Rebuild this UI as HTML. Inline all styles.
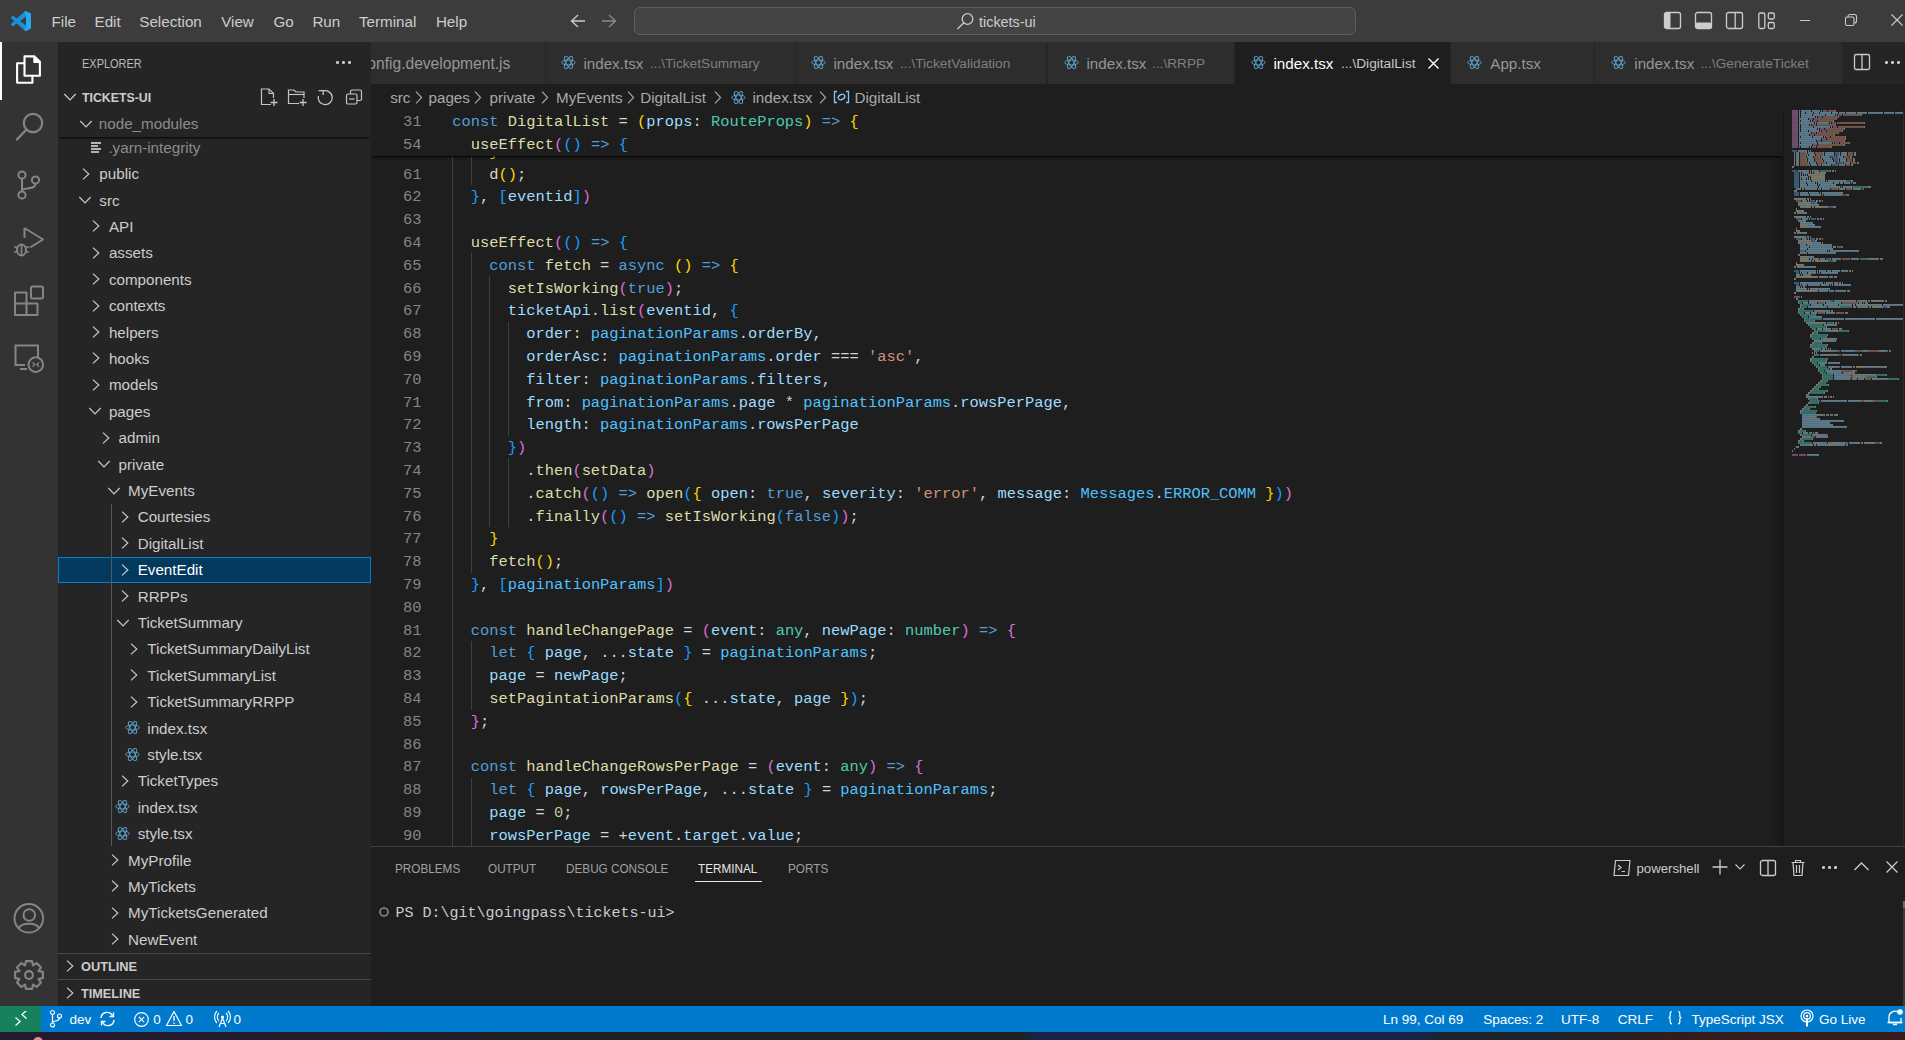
<!DOCTYPE html><html><head><meta charset="utf-8"><style>
html,body{margin:0;padding:0;}
body{width:1905px;height:1040px;position:relative;overflow:hidden;background:#1e1e1e;font-family:"Liberation Sans",sans-serif;}
.t{position:absolute;white-space:pre;}
.r{position:absolute;}
.code{position:absolute;white-space:pre;font-family:"Liberation Mono",monospace;}
</style></head><body>
<div class="r" style="left:0px;top:0px;width:1905px;height:42px;background:#3c3c3c;"></div>
<svg class="r" style="left:10.9px;top:10.6px;" width="20" height="20" viewBox="0 0 100 100"><path fill="#1c8fdc" d="M96.46 10.8 75.86.87a6.23 6.23 0 0 0-7.1 1.2L29.35 38.04 12.18 25.01a4.16 4.16 0 0 0-5.31.24L1.37 30.25a4.16 4.16 0 0 0 0 6.16L16.26 50 1.37 63.59a4.16 4.16 0 0 0 0 6.16l5.5 5a4.16 4.16 0 0 0 5.31.24l17.17-13.03 39.41 35.97a6.23 6.23 0 0 0 7.1 1.2l20.6-9.92A6.25 6.25 0 0 0 100 83.6V16.4a6.25 6.25 0 0 0-3.54-5.6ZM75.02 72.7 45.11 50l29.9-22.7v45.4Z"/>
<path fill="#27a8f5" d="M75.86.87a6.23 6.23 0 0 0-7.1 1.2L68 3 75.02 27.3V72.7L68 97l.76.93a6.23 6.23 0 0 0 7.1 1.2l20.6-9.92A6.25 6.25 0 0 0 100 83.6V16.4a6.25 6.25 0 0 0-3.54-5.6Z"/></svg>
<div class="t" style="left:51.60px;top:14.33px;font-size:15.2px;line-height:15.2px;color:#cccccc;font-family:'Liberation Sans', sans-serif;font-weight:normal;">File</div>
<div class="t" style="left:94.50px;top:14.33px;font-size:15.2px;line-height:15.2px;color:#cccccc;font-family:'Liberation Sans', sans-serif;font-weight:normal;">Edit</div>
<div class="t" style="left:139.30px;top:14.33px;font-size:15.2px;line-height:15.2px;color:#cccccc;font-family:'Liberation Sans', sans-serif;font-weight:normal;">Selection</div>
<div class="t" style="left:221.20px;top:14.33px;font-size:15.2px;line-height:15.2px;color:#cccccc;font-family:'Liberation Sans', sans-serif;font-weight:normal;">View</div>
<div class="t" style="left:273.40px;top:14.33px;font-size:15.2px;line-height:15.2px;color:#cccccc;font-family:'Liberation Sans', sans-serif;font-weight:normal;">Go</div>
<div class="t" style="left:312.40px;top:14.33px;font-size:15.2px;line-height:15.2px;color:#cccccc;font-family:'Liberation Sans', sans-serif;font-weight:normal;">Run</div>
<div class="t" style="left:359.00px;top:14.33px;font-size:15.2px;line-height:15.2px;color:#cccccc;font-family:'Liberation Sans', sans-serif;font-weight:normal;">Terminal</div>
<div class="t" style="left:435.90px;top:14.33px;font-size:15.2px;line-height:15.2px;color:#cccccc;font-family:'Liberation Sans', sans-serif;font-weight:normal;">Help</div>
<svg class="r" style="left:569px;top:13px;" width="18" height="16" viewBox="0 0 18 16"><path d="M9 2 L2.5 8 L9 14 M2.5 8 H16" stroke="#cccccc" stroke-width="1.3" fill="none"/></svg>
<svg class="r" style="left:600px;top:13px;" width="18" height="16" viewBox="0 0 18 16"><path d="M9 2 L15.5 8 L9 14 M15.5 8 H2" stroke="#8b8b8b" stroke-width="1.3" fill="none"/></svg>
<div class="r" style="left:634px;top:7px;width:720px;height:26px;border:1px solid #5e5e5e;border-radius:6px;background:#444444;"></div>
<svg class="r" style="left:956px;top:12px;" width="19" height="19" viewBox="0 0 19 19"><circle cx="11.5" cy="7" r="5.3" stroke="#c8c8c8" stroke-width="1.3" fill="none"/><path d="M7.8 10.8 L1.5 17" stroke="#c8c8c8" stroke-width="1.4"/></svg>
<div class="t" style="left:979.00px;top:14.81px;font-size:14.4px;line-height:14.4px;color:#cccccc;font-family:'Liberation Sans', sans-serif;font-weight:normal;">tickets-ui</div>
<svg class="r" style="left:1663px;top:11px;" width="20" height="20" viewBox="0 0 20 20"><rect x="1.5" y="1.5" width="16" height="16" rx="2" stroke="#cccccc" stroke-width="1.3" fill="none"/><rect x="1.5" y="1.5" width="6" height="16" rx="1.5" fill="#cccccc"/></svg>
<svg class="r" style="left:1694px;top:11px;" width="20" height="20" viewBox="0 0 20 20"><rect x="1.5" y="1.5" width="16" height="16" rx="2" stroke="#cccccc" stroke-width="1.3" fill="none"/><rect x="1.5" y="11.5" width="16" height="6" rx="1.5" fill="#cccccc"/></svg>
<svg class="r" style="left:1725px;top:11px;" width="20" height="20" viewBox="0 0 20 20"><rect x="1.5" y="1.5" width="16" height="16" rx="2" stroke="#cccccc" stroke-width="1.3" fill="none"/><path d="M10.2 1.5 V17.5" stroke="#cccccc" stroke-width="1.3"/></svg>
<svg class="r" style="left:1757px;top:11px;" width="20" height="20" viewBox="0 0 20 20"><rect x="1.8" y="2" width="6" height="15.5" rx="1.5" stroke="#cccccc" stroke-width="1.3" fill="none"/><rect x="11.3" y="2" width="6" height="6" rx="1.5" stroke="#cccccc" stroke-width="1.3" fill="none"/><rect x="11.3" y="11.5" width="6" height="6" rx="1.5" stroke="#cccccc" stroke-width="1.3" fill="none"/></svg>
<div class="r" style="left:1800px;top:20px;width:10px;height:1.2px;background:#cccccc;"></div>
<svg class="r" style="left:1844px;top:13px;" width="14" height="14" viewBox="0 0 14 14"><rect x="1.5" y="4" width="8.5" height="8.5" rx="1.5" stroke="#cccccc" stroke-width="1.1" fill="none"/><path d="M4 4 V3.5 A2 2 0 0 1 6 1.5 H10.5 A2 2 0 0 1 12.5 3.5 V8 A2 2 0 0 1 10.5 10" stroke="#cccccc" stroke-width="1.1" fill="none"/></svg>
<svg class="r" style="left:1890px;top:13px;" width="14" height="14" viewBox="0 0 14 14"><path d="M1.5 1.5 L12.5 12.5 M12.5 1.5 L1.5 12.5" stroke="#cccccc" stroke-width="1.1"/></svg>
<div class="r" style="left:0px;top:42px;width:58px;height:964px;background:#333333;"></div>
<div class="r" style="left:0px;top:42px;width:2.4px;height:58px;background:#ffffff;"></div>
<svg class="r" style="left:14px;top:54px;" width="30" height="32" viewBox="0 0 30 32"><path d="M10.5 2.4 H20.5 L25.9 7.8 V21.8 H10.5 Z" stroke="#ffffff" stroke-width="2.1" fill="none" stroke-linejoin="round"/>
<path d="M19.8 2.6 V8.5 H25.7 Z" fill="#ffffff" stroke="#ffffff" stroke-width="1" stroke-linejoin="round"/>
<path d="M10.5 9.3 H3.1 V28.8 H18.4 V21.8" stroke="#ffffff" stroke-width="2.1" fill="none" stroke-linejoin="round"/></svg>
<svg class="r" style="left:14px;top:111px;" width="32" height="32" viewBox="0 0 32 32"><circle cx="19" cy="12" r="9.2" stroke="#858585" stroke-width="2.2" fill="none"/><path d="M12.5 18.5 L3 28.5" stroke="#858585" stroke-width="2.4" stroke-linecap="round"/></svg>
<svg class="r" style="left:14px;top:168px;" width="32" height="32" viewBox="0 0 32 32"><circle cx="8" cy="7" r="3.6" stroke="#858585" stroke-width="2" fill="none"/><circle cx="21.5" cy="12" r="3.6" stroke="#858585" stroke-width="2" fill="none"/><circle cx="8" cy="27" r="3.6" stroke="#858585" stroke-width="2" fill="none"/><path d="M8 10.6 V23.4 M21.5 15.6 C21.5 20 18 19.5 8 21.5" stroke="#858585" stroke-width="2" fill="none"/></svg>
<svg class="r" style="left:12px;top:224px;" width="34" height="34" viewBox="0 0 34 34"><path d="M12.5 4 V14 M12.5 4 L31 15.5 L18 23.5" stroke="#858585" stroke-width="2" fill="none" stroke-linejoin="round"/><ellipse cx="9.5" cy="26" rx="4.5" ry="5.5" stroke="#858585" stroke-width="2" fill="none"/><path d="M2 23 H5 M2 28 H5 M14 23 H17 M14 28 H17 M9.5 20.5 V31" stroke="#858585" stroke-width="1.7"/></svg>
<svg class="r" style="left:12px;top:283px;" width="34" height="34" viewBox="0 0 34 34"><path d="M3 9.5 H14.5 V20.5 H25.5 V32 H3 Z M3 20.5 H14.5 V32" stroke="#858585" stroke-width="2" fill="none" stroke-linejoin="round"/><rect x="19" y="3.5" width="12" height="12" rx="1.5" stroke="#858585" stroke-width="2" fill="none"/></svg>
<svg class="r" style="left:12px;top:342px;" width="34" height="34" viewBox="0 0 34 34"><path d="M26 16 V3.5 H3.5 V23 H13" stroke="#858585" stroke-width="2" fill="none"/><path d="M8 27 H15" stroke="#858585" stroke-width="2"/><circle cx="23.8" cy="22.6" r="7.3" stroke="#858585" stroke-width="2" fill="none"/><path d="M20.5 20.5 L22.8 22.6 L20.5 24.7 M27 20.5 L24.7 22.6 L27 24.7" stroke="#858585" stroke-width="1.3" fill="none"/></svg>
<svg class="r" style="left:12px;top:902px;" width="34" height="34" viewBox="0 0 34 34"><circle cx="16.8" cy="16.3" r="14.3" stroke="#858585" stroke-width="2" fill="none"/><circle cx="17.3" cy="13" r="5.8" stroke="#858585" stroke-width="2" fill="none"/><path d="M6.5 26.5 C9 20 24.5 20 27.5 26.5" stroke="#858585" stroke-width="2" fill="none"/></svg>
<svg class="r" style="left:12px;top:958px;" width="34" height="34" viewBox="0 0 34 34"><path d="M30.86 13.90 L30.86 20.10 L26.49 21.01 L26.54 20.87 L28.99 24.61 L24.61 28.99 L20.87 26.54 L21.01 26.49 L20.10 30.86 L13.90 30.86 L12.99 26.49 L13.13 26.54 L9.39 28.99 L5.01 24.61 L7.46 20.87 L7.51 21.01 L3.14 20.10 L3.14 13.90 L7.51 12.99 L7.46 13.13 L5.01 9.39 L9.39 5.01 L13.13 7.46 L12.99 7.51 L13.90 3.14 L20.10 3.14 L21.01 7.51 L20.87 7.46 L24.61 5.01 L28.99 9.39 L26.54 13.13 L26.49 12.99 Z" stroke="#858585" stroke-width="2.1" fill="none" stroke-linejoin="round"/><circle cx="17" cy="17" r="3.9" stroke="#858585" stroke-width="2.1" fill="none"/></svg>
<div class="r" style="left:58px;top:42px;width:313px;height:964px;background:#252526;"></div>
<div class="t" style="left:81.90px;top:57.70px;font-size:12.4px;line-height:12.4px;color:#bbbbbb;font-family:'Liberation Sans', sans-serif;font-weight:normal;transform:scaleX(0.885);transform-origin:0 0;">EXPLORER</div>
<div class="r" style="left:336.0px;top:61px;width:2.6px;height:2.6px;background:#cccccc;border-radius:50%"></div>
<div class="r" style="left:342.2px;top:61px;width:2.6px;height:2.6px;background:#cccccc;border-radius:50%"></div>
<div class="r" style="left:348.4px;top:61px;width:2.6px;height:2.6px;background:#cccccc;border-radius:50%"></div>
<svg class="r" style="left:62.5px;top:91.2px;" width="14" height="12" viewBox="0 0 14 12"><path d="M1.3 3 L7 8.9 L12.7 3" stroke="#cccccc" stroke-width="1.25" fill="none"/></svg>
<div class="t" style="left:81.90px;top:90.51px;font-size:13.1px;line-height:13.1px;color:#cccccc;font-family:'Liberation Sans', sans-serif;font-weight:bold;transform:scaleX(0.94);transform-origin:0 0;">TICKETS-UI</div>
<svg class="r" style="left:258px;top:87px;" width="20" height="20" viewBox="0 0 20 20"><path d="M13 17.5 H3.5 V2 H11 L15.5 6.5 V11" stroke="#c5c5c5" stroke-width="1.2" fill="none"/><path d="M11 2 V6.5 H15.5" stroke="#c5c5c5" stroke-width="1.1" fill="none"/><path d="M16 12 V19 M12.5 15.5 H19.5" stroke="#c5c5c5" stroke-width="1.3"/></svg>
<svg class="r" style="left:286px;top:87px;" width="22" height="20" viewBox="0 0 22 20"><path d="M13 16.5 H2.5 V3 H8 L10 5 H18 V11" stroke="#c5c5c5" stroke-width="1.2" fill="none"/><path d="M2.5 7.5 H18" stroke="#c5c5c5" stroke-width="1.1"/><path d="M17 12 V19 M13.5 15.5 H20.5" stroke="#c5c5c5" stroke-width="1.3"/></svg>
<svg class="r" style="left:315px;top:87px;" width="20" height="20" viewBox="0 0 20 20"><path d="M8.3 3.9 A7 7 0 1 1 3.4 9.0" stroke="#c5c5c5" stroke-width="1.3" fill="none"/><path d="M3.6 3.7 H8.2 V8.1" stroke="#c5c5c5" stroke-width="1.3" fill="none"/></svg>
<svg class="r" style="left:344px;top:87px;" width="20" height="20" viewBox="0 0 20 20"><rect x="2.5" y="7" width="10.5" height="10" rx="1.5" stroke="#c5c5c5" stroke-width="1.2" fill="none"/><path d="M6.5 7 V4.5 A1.5 1.5 0 0 1 8 3 H16 A1.5 1.5 0 0 1 17.5 4.5 V12 A1.5 1.5 0 0 1 16 13.5 H13" stroke="#c5c5c5" stroke-width="1.2" fill="none"/><path d="M5 12 H10.5" stroke="#c5c5c5" stroke-width="1.2"/></svg>
<div class="r" style="left:58px;top:556.8px;width:313px;height:26.4px;background:#04395e;box-sizing:border-box;border:1px solid #007fd4;"></div>
<svg class="r" style="left:90px;top:141.4px;" width="13" height="13" viewBox="0 0 13 13"><path d="M1 2 H11 M1 5 H8 M1 8 H11 M1 11 H9" stroke="#b4b4b4" stroke-width="1.8"/></svg>
<div class="t" style="left:108.40px;top:139.73px;font-size:15.2px;line-height:15.2px;color:#8c8c8c;font-family:'Liberation Sans', sans-serif;font-weight:normal;">.yarn-integrity</div>
<svg class="r" style="left:81.3px;top:166.5px;" width="10" height="14" viewBox="0 0 10 14"><path d="M2 1.6 L7.8 7 L2 12.4" stroke="#c5c5c5" stroke-width="1.25" fill="none"/></svg>
<div class="t" style="left:99.30px;top:166.13px;font-size:15.2px;line-height:15.2px;color:#cccccc;font-family:'Liberation Sans', sans-serif;font-weight:normal;">public</div>
<svg class="r" style="left:78.0px;top:194.1px;" width="14" height="12" viewBox="0 0 14 12"><path d="M1.3 3 L7 8.9 L12.7 3" stroke="#c5c5c5" stroke-width="1.25" fill="none"/></svg>
<div class="t" style="left:99.30px;top:192.53px;font-size:15.2px;line-height:15.2px;color:#cccccc;font-family:'Liberation Sans', sans-serif;font-weight:normal;">src</div>
<svg class="r" style="left:90.9px;top:219.3px;" width="10" height="14" viewBox="0 0 10 14"><path d="M2 1.6 L7.8 7 L2 12.4" stroke="#c5c5c5" stroke-width="1.25" fill="none"/></svg>
<div class="t" style="left:108.90px;top:218.93px;font-size:15.2px;line-height:15.2px;color:#cccccc;font-family:'Liberation Sans', sans-serif;font-weight:normal;">API</div>
<svg class="r" style="left:90.9px;top:245.7px;" width="10" height="14" viewBox="0 0 10 14"><path d="M2 1.6 L7.8 7 L2 12.4" stroke="#c5c5c5" stroke-width="1.25" fill="none"/></svg>
<div class="t" style="left:108.90px;top:245.33px;font-size:15.2px;line-height:15.2px;color:#cccccc;font-family:'Liberation Sans', sans-serif;font-weight:normal;">assets</div>
<svg class="r" style="left:90.9px;top:272.09999999999997px;" width="10" height="14" viewBox="0 0 10 14"><path d="M2 1.6 L7.8 7 L2 12.4" stroke="#c5c5c5" stroke-width="1.25" fill="none"/></svg>
<div class="t" style="left:108.90px;top:271.73px;font-size:15.2px;line-height:15.2px;color:#cccccc;font-family:'Liberation Sans', sans-serif;font-weight:normal;">components</div>
<svg class="r" style="left:90.9px;top:298.5px;" width="10" height="14" viewBox="0 0 10 14"><path d="M2 1.6 L7.8 7 L2 12.4" stroke="#c5c5c5" stroke-width="1.25" fill="none"/></svg>
<div class="t" style="left:108.90px;top:298.13px;font-size:15.2px;line-height:15.2px;color:#cccccc;font-family:'Liberation Sans', sans-serif;font-weight:normal;">contexts</div>
<svg class="r" style="left:90.9px;top:324.9px;" width="10" height="14" viewBox="0 0 10 14"><path d="M2 1.6 L7.8 7 L2 12.4" stroke="#c5c5c5" stroke-width="1.25" fill="none"/></svg>
<div class="t" style="left:108.90px;top:324.53px;font-size:15.2px;line-height:15.2px;color:#cccccc;font-family:'Liberation Sans', sans-serif;font-weight:normal;">helpers</div>
<svg class="r" style="left:90.9px;top:351.3px;" width="10" height="14" viewBox="0 0 10 14"><path d="M2 1.6 L7.8 7 L2 12.4" stroke="#c5c5c5" stroke-width="1.25" fill="none"/></svg>
<div class="t" style="left:108.90px;top:350.93px;font-size:15.2px;line-height:15.2px;color:#cccccc;font-family:'Liberation Sans', sans-serif;font-weight:normal;">hooks</div>
<svg class="r" style="left:90.9px;top:377.7px;" width="10" height="14" viewBox="0 0 10 14"><path d="M2 1.6 L7.8 7 L2 12.4" stroke="#c5c5c5" stroke-width="1.25" fill="none"/></svg>
<div class="t" style="left:108.90px;top:377.33px;font-size:15.2px;line-height:15.2px;color:#cccccc;font-family:'Liberation Sans', sans-serif;font-weight:normal;">models</div>
<svg class="r" style="left:87.60000000000001px;top:405.29999999999995px;" width="14" height="12" viewBox="0 0 14 12"><path d="M1.3 3 L7 8.9 L12.7 3" stroke="#c5c5c5" stroke-width="1.25" fill="none"/></svg>
<div class="t" style="left:108.90px;top:403.73px;font-size:15.2px;line-height:15.2px;color:#cccccc;font-family:'Liberation Sans', sans-serif;font-weight:normal;">pages</div>
<svg class="r" style="left:100.5px;top:430.5px;" width="10" height="14" viewBox="0 0 10 14"><path d="M2 1.6 L7.8 7 L2 12.4" stroke="#c5c5c5" stroke-width="1.25" fill="none"/></svg>
<div class="t" style="left:118.50px;top:430.13px;font-size:15.2px;line-height:15.2px;color:#cccccc;font-family:'Liberation Sans', sans-serif;font-weight:normal;">admin</div>
<svg class="r" style="left:97.2px;top:458.09999999999997px;" width="14" height="12" viewBox="0 0 14 12"><path d="M1.3 3 L7 8.9 L12.7 3" stroke="#c5c5c5" stroke-width="1.25" fill="none"/></svg>
<div class="t" style="left:118.50px;top:456.53px;font-size:15.2px;line-height:15.2px;color:#cccccc;font-family:'Liberation Sans', sans-serif;font-weight:normal;">private</div>
<svg class="r" style="left:106.8px;top:484.49999999999994px;" width="14" height="12" viewBox="0 0 14 12"><path d="M1.3 3 L7 8.9 L12.7 3" stroke="#c5c5c5" stroke-width="1.25" fill="none"/></svg>
<div class="t" style="left:128.10px;top:482.93px;font-size:15.2px;line-height:15.2px;color:#cccccc;font-family:'Liberation Sans', sans-serif;font-weight:normal;">MyEvents</div>
<svg class="r" style="left:119.69999999999999px;top:509.70000000000005px;" width="10" height="14" viewBox="0 0 10 14"><path d="M2 1.6 L7.8 7 L2 12.4" stroke="#c5c5c5" stroke-width="1.25" fill="none"/></svg>
<div class="t" style="left:137.70px;top:509.33px;font-size:15.2px;line-height:15.2px;color:#cccccc;font-family:'Liberation Sans', sans-serif;font-weight:normal;">Courtesies</div>
<svg class="r" style="left:119.69999999999999px;top:536.1px;" width="10" height="14" viewBox="0 0 10 14"><path d="M2 1.6 L7.8 7 L2 12.4" stroke="#c5c5c5" stroke-width="1.25" fill="none"/></svg>
<div class="t" style="left:137.70px;top:535.73px;font-size:15.2px;line-height:15.2px;color:#cccccc;font-family:'Liberation Sans', sans-serif;font-weight:normal;">DigitalList</div>
<svg class="r" style="left:119.69999999999999px;top:562.5px;" width="10" height="14" viewBox="0 0 10 14"><path d="M2 1.6 L7.8 7 L2 12.4" stroke="#c5c5c5" stroke-width="1.25" fill="none"/></svg>
<div class="t" style="left:137.70px;top:562.13px;font-size:15.2px;line-height:15.2px;color:#ffffff;font-family:'Liberation Sans', sans-serif;font-weight:normal;">EventEdit</div>
<svg class="r" style="left:119.69999999999999px;top:588.9000000000001px;" width="10" height="14" viewBox="0 0 10 14"><path d="M2 1.6 L7.8 7 L2 12.4" stroke="#c5c5c5" stroke-width="1.25" fill="none"/></svg>
<div class="t" style="left:137.70px;top:588.53px;font-size:15.2px;line-height:15.2px;color:#cccccc;font-family:'Liberation Sans', sans-serif;font-weight:normal;">RRPPs</div>
<svg class="r" style="left:116.39999999999999px;top:616.5px;" width="14" height="12" viewBox="0 0 14 12"><path d="M1.3 3 L7 8.9 L12.7 3" stroke="#c5c5c5" stroke-width="1.25" fill="none"/></svg>
<div class="t" style="left:137.70px;top:614.93px;font-size:15.2px;line-height:15.2px;color:#cccccc;font-family:'Liberation Sans', sans-serif;font-weight:normal;">TicketSummary</div>
<svg class="r" style="left:129.3px;top:641.7px;" width="10" height="14" viewBox="0 0 10 14"><path d="M2 1.6 L7.8 7 L2 12.4" stroke="#c5c5c5" stroke-width="1.25" fill="none"/></svg>
<div class="t" style="left:147.30px;top:641.33px;font-size:15.2px;line-height:15.2px;color:#cccccc;font-family:'Liberation Sans', sans-serif;font-weight:normal;">TicketSummaryDailyList</div>
<svg class="r" style="left:129.3px;top:668.1px;" width="10" height="14" viewBox="0 0 10 14"><path d="M2 1.6 L7.8 7 L2 12.4" stroke="#c5c5c5" stroke-width="1.25" fill="none"/></svg>
<div class="t" style="left:147.30px;top:667.73px;font-size:15.2px;line-height:15.2px;color:#cccccc;font-family:'Liberation Sans', sans-serif;font-weight:normal;">TicketSummaryList</div>
<svg class="r" style="left:129.3px;top:694.5px;" width="10" height="14" viewBox="0 0 10 14"><path d="M2 1.6 L7.8 7 L2 12.4" stroke="#c5c5c5" stroke-width="1.25" fill="none"/></svg>
<div class="t" style="left:147.30px;top:694.13px;font-size:15.2px;line-height:15.2px;color:#cccccc;font-family:'Liberation Sans', sans-serif;font-weight:normal;">TicketSummaryRRPP</div>
<svg class="r" style="left:124.80000000000001px;top:720.1000000000001px;" width="15" height="15" viewBox="0 0 15 15"><ellipse cx="7.5" cy="7.5" rx="6.8" ry="2.5" transform="rotate(0 7.5 7.5)" stroke="#5c9fc8" stroke-width="0.95" fill="none"/><ellipse cx="7.5" cy="7.5" rx="6.8" ry="2.5" transform="rotate(60 7.5 7.5)" stroke="#5c9fc8" stroke-width="0.95" fill="none"/><ellipse cx="7.5" cy="7.5" rx="6.8" ry="2.5" transform="rotate(120 7.5 7.5)" stroke="#5c9fc8" stroke-width="0.95" fill="none"/></svg>
<div class="t" style="left:147.30px;top:720.53px;font-size:15.2px;line-height:15.2px;color:#cccccc;font-family:'Liberation Sans', sans-serif;font-weight:normal;">index.tsx</div>
<svg class="r" style="left:124.80000000000001px;top:746.5px;" width="15" height="15" viewBox="0 0 15 15"><ellipse cx="7.5" cy="7.5" rx="6.8" ry="2.5" transform="rotate(0 7.5 7.5)" stroke="#5c9fc8" stroke-width="0.95" fill="none"/><ellipse cx="7.5" cy="7.5" rx="6.8" ry="2.5" transform="rotate(60 7.5 7.5)" stroke="#5c9fc8" stroke-width="0.95" fill="none"/><ellipse cx="7.5" cy="7.5" rx="6.8" ry="2.5" transform="rotate(120 7.5 7.5)" stroke="#5c9fc8" stroke-width="0.95" fill="none"/></svg>
<div class="t" style="left:147.30px;top:746.93px;font-size:15.2px;line-height:15.2px;color:#cccccc;font-family:'Liberation Sans', sans-serif;font-weight:normal;">style.tsx</div>
<svg class="r" style="left:119.69999999999999px;top:773.7px;" width="10" height="14" viewBox="0 0 10 14"><path d="M2 1.6 L7.8 7 L2 12.4" stroke="#c5c5c5" stroke-width="1.25" fill="none"/></svg>
<div class="t" style="left:137.70px;top:773.33px;font-size:15.2px;line-height:15.2px;color:#cccccc;font-family:'Liberation Sans', sans-serif;font-weight:normal;">TicketTypes</div>
<svg class="r" style="left:115.19999999999999px;top:799.3px;" width="15" height="15" viewBox="0 0 15 15"><ellipse cx="7.5" cy="7.5" rx="6.8" ry="2.5" transform="rotate(0 7.5 7.5)" stroke="#5c9fc8" stroke-width="0.95" fill="none"/><ellipse cx="7.5" cy="7.5" rx="6.8" ry="2.5" transform="rotate(60 7.5 7.5)" stroke="#5c9fc8" stroke-width="0.95" fill="none"/><ellipse cx="7.5" cy="7.5" rx="6.8" ry="2.5" transform="rotate(120 7.5 7.5)" stroke="#5c9fc8" stroke-width="0.95" fill="none"/></svg>
<div class="t" style="left:137.70px;top:799.73px;font-size:15.2px;line-height:15.2px;color:#cccccc;font-family:'Liberation Sans', sans-serif;font-weight:normal;">index.tsx</div>
<svg class="r" style="left:115.19999999999999px;top:825.7px;" width="15" height="15" viewBox="0 0 15 15"><ellipse cx="7.5" cy="7.5" rx="6.8" ry="2.5" transform="rotate(0 7.5 7.5)" stroke="#5c9fc8" stroke-width="0.95" fill="none"/><ellipse cx="7.5" cy="7.5" rx="6.8" ry="2.5" transform="rotate(60 7.5 7.5)" stroke="#5c9fc8" stroke-width="0.95" fill="none"/><ellipse cx="7.5" cy="7.5" rx="6.8" ry="2.5" transform="rotate(120 7.5 7.5)" stroke="#5c9fc8" stroke-width="0.95" fill="none"/></svg>
<div class="t" style="left:137.70px;top:826.13px;font-size:15.2px;line-height:15.2px;color:#cccccc;font-family:'Liberation Sans', sans-serif;font-weight:normal;">style.tsx</div>
<svg class="r" style="left:110.1px;top:852.9000000000001px;" width="10" height="14" viewBox="0 0 10 14"><path d="M2 1.6 L7.8 7 L2 12.4" stroke="#c5c5c5" stroke-width="1.25" fill="none"/></svg>
<div class="t" style="left:128.10px;top:852.53px;font-size:15.2px;line-height:15.2px;color:#cccccc;font-family:'Liberation Sans', sans-serif;font-weight:normal;">MyProfile</div>
<svg class="r" style="left:110.1px;top:879.3px;" width="10" height="14" viewBox="0 0 10 14"><path d="M2 1.6 L7.8 7 L2 12.4" stroke="#c5c5c5" stroke-width="1.25" fill="none"/></svg>
<div class="t" style="left:128.10px;top:878.93px;font-size:15.2px;line-height:15.2px;color:#cccccc;font-family:'Liberation Sans', sans-serif;font-weight:normal;">MyTickets</div>
<svg class="r" style="left:110.1px;top:905.7px;" width="10" height="14" viewBox="0 0 10 14"><path d="M2 1.6 L7.8 7 L2 12.4" stroke="#c5c5c5" stroke-width="1.25" fill="none"/></svg>
<div class="t" style="left:128.10px;top:905.33px;font-size:15.2px;line-height:15.2px;color:#cccccc;font-family:'Liberation Sans', sans-serif;font-weight:normal;">MyTicketsGenerated</div>
<svg class="r" style="left:110.1px;top:932.0999999999999px;" width="10" height="14" viewBox="0 0 10 14"><path d="M2 1.6 L7.8 7 L2 12.4" stroke="#c5c5c5" stroke-width="1.25" fill="none"/></svg>
<div class="t" style="left:128.10px;top:931.73px;font-size:15.2px;line-height:15.2px;color:#cccccc;font-family:'Liberation Sans', sans-serif;font-weight:normal;">NewEvent</div>
<div class="r" style="left:111px;top:504px;width:1px;height:342px;background:#585858;"></div>
<div class="r" style="left:58px;top:110.4px;width:313px;height:26.4px;background:#252526;box-shadow:0 3px 2px -2px #000;"></div>
<svg class="r" style="left:79px;top:117.6px;" width="14" height="12" viewBox="0 0 14 12"><path d="M1.3 3 L7 8.9 L12.7 3" stroke="#c5c5c5" stroke-width="1.25" fill="none"/></svg>
<div class="t" style="left:98.80px;top:115.73px;font-size:15.2px;line-height:15.2px;color:#8c8c8c;font-family:'Liberation Sans', sans-serif;font-weight:normal;">node_modules</div>
<div class="r" style="left:58px;top:952.8px;width:313px;height:1px;background:#474748;"></div>
<svg class="r" style="left:64.5px;top:959.3px;" width="10" height="14" viewBox="0 0 10 14"><path d="M2 1.6 L7.8 7 L2 12.4" stroke="#c5c5c5" stroke-width="1.25" fill="none"/></svg>
<div class="t" style="left:81.30px;top:960.11px;font-size:13.1px;line-height:13.1px;color:#cccccc;font-family:'Liberation Sans', sans-serif;font-weight:bold;transform:scaleX(0.975);transform-origin:0 0;">OUTLINE</div>
<div class="r" style="left:58px;top:979.2px;width:313px;height:1px;background:#474748;"></div>
<svg class="r" style="left:64.5px;top:985.7px;" width="10" height="14" viewBox="0 0 10 14"><path d="M2 1.6 L7.8 7 L2 12.4" stroke="#c5c5c5" stroke-width="1.25" fill="none"/></svg>
<div class="t" style="left:81.30px;top:986.51px;font-size:13.1px;line-height:13.1px;color:#cccccc;font-family:'Liberation Sans', sans-serif;font-weight:bold;transform:scaleX(0.97);transform-origin:0 0;">TIMELINE</div>
<div class="r" style="left:371px;top:42px;width:1534px;height:42px;background:#252526;"></div>
<div class="r" style="left:371px;top:42px;width:173.70000000000005px;height:42px;background:#2d2d2d;"></div>
<div class="r" style="left:371px;top:42px;width:173px;height:42px;overflow:hidden;">
<div class="t" style="left:-3.70px;top:13.59px;font-size:15.6px;line-height:15.6px;color:#969696;font-family:'Liberation Sans', sans-serif;font-weight:normal;">onfig.development.js</div>
</div>
<div class="r" style="left:545.7px;top:42px;width:249.0px;height:42px;background:#2d2d2d;"></div>
<svg class="r" style="left:561.0px;top:54.9px;" width="15" height="15" viewBox="0 0 15 15"><ellipse cx="7.5" cy="7.5" rx="6.8" ry="2.5" transform="rotate(0 7.5 7.5)" stroke="#5c9fc8" stroke-width="0.95" fill="none"/><ellipse cx="7.5" cy="7.5" rx="6.8" ry="2.5" transform="rotate(60 7.5 7.5)" stroke="#5c9fc8" stroke-width="0.95" fill="none"/><ellipse cx="7.5" cy="7.5" rx="6.8" ry="2.5" transform="rotate(120 7.5 7.5)" stroke="#5c9fc8" stroke-width="0.95" fill="none"/></svg>
<div class="t" style="left:583.40px;top:55.93px;font-size:15.2px;line-height:15.2px;color:#969696;font-family:'Liberation Sans', sans-serif;font-weight:normal;">index.tsx</div>
<div class="t" style="left:649.80px;top:57.20px;font-size:13.7px;line-height:13.7px;color:#7f7f7f;font-family:'Liberation Sans', sans-serif;font-weight:normal;">...\TicketSummary</div>
<div class="r" style="left:795.7px;top:42px;width:250.79999999999995px;height:42px;background:#2d2d2d;"></div>
<svg class="r" style="left:810.5px;top:54.9px;" width="15" height="15" viewBox="0 0 15 15"><ellipse cx="7.5" cy="7.5" rx="6.8" ry="2.5" transform="rotate(0 7.5 7.5)" stroke="#5c9fc8" stroke-width="0.95" fill="none"/><ellipse cx="7.5" cy="7.5" rx="6.8" ry="2.5" transform="rotate(60 7.5 7.5)" stroke="#5c9fc8" stroke-width="0.95" fill="none"/><ellipse cx="7.5" cy="7.5" rx="6.8" ry="2.5" transform="rotate(120 7.5 7.5)" stroke="#5c9fc8" stroke-width="0.95" fill="none"/></svg>
<div class="t" style="left:833.50px;top:55.93px;font-size:15.2px;line-height:15.2px;color:#969696;font-family:'Liberation Sans', sans-serif;font-weight:normal;">index.tsx</div>
<div class="t" style="left:900.00px;top:57.20px;font-size:13.7px;line-height:13.7px;color:#7f7f7f;font-family:'Liberation Sans', sans-serif;font-weight:normal;">...\TicketValidation</div>
<div class="r" style="left:1047.5px;top:42px;width:186.79999999999995px;height:42px;background:#2d2d2d;"></div>
<svg class="r" style="left:1063.5px;top:54.9px;" width="15" height="15" viewBox="0 0 15 15"><ellipse cx="7.5" cy="7.5" rx="6.8" ry="2.5" transform="rotate(0 7.5 7.5)" stroke="#5c9fc8" stroke-width="0.95" fill="none"/><ellipse cx="7.5" cy="7.5" rx="6.8" ry="2.5" transform="rotate(60 7.5 7.5)" stroke="#5c9fc8" stroke-width="0.95" fill="none"/><ellipse cx="7.5" cy="7.5" rx="6.8" ry="2.5" transform="rotate(120 7.5 7.5)" stroke="#5c9fc8" stroke-width="0.95" fill="none"/></svg>
<div class="t" style="left:1086.50px;top:55.93px;font-size:15.2px;line-height:15.2px;color:#969696;font-family:'Liberation Sans', sans-serif;font-weight:normal;">index.tsx</div>
<div class="t" style="left:1152.00px;top:57.20px;font-size:13.7px;line-height:13.7px;color:#7f7f7f;font-family:'Liberation Sans', sans-serif;font-weight:normal;">...\RRPP</div>
<div class="r" style="left:1235.3px;top:42px;width:214.9000000000001px;height:42px;background:#1e1e1e;"></div>
<svg class="r" style="left:1251.2px;top:54.9px;" width="15" height="15" viewBox="0 0 15 15"><ellipse cx="7.5" cy="7.5" rx="6.8" ry="2.5" transform="rotate(0 7.5 7.5)" stroke="#5c9fc8" stroke-width="0.95" fill="none"/><ellipse cx="7.5" cy="7.5" rx="6.8" ry="2.5" transform="rotate(60 7.5 7.5)" stroke="#5c9fc8" stroke-width="0.95" fill="none"/><ellipse cx="7.5" cy="7.5" rx="6.8" ry="2.5" transform="rotate(120 7.5 7.5)" stroke="#5c9fc8" stroke-width="0.95" fill="none"/></svg>
<div class="t" style="left:1273.50px;top:55.93px;font-size:15.2px;line-height:15.2px;color:#ffffff;font-family:'Liberation Sans', sans-serif;font-weight:normal;">index.tsx</div>
<div class="t" style="left:1341.00px;top:57.20px;font-size:13.7px;line-height:13.7px;color:#c8c8c8;font-family:'Liberation Sans', sans-serif;font-weight:normal;">...\DigitalList</div>
<svg class="r" style="left:1427px;top:57px;" width="13" height="13" viewBox="0 0 13 13"><path d="M1.5 1.5 L11.5 11.5 M11.5 1.5 L1.5 11.5" stroke="#ffffff" stroke-width="1.4"/></svg>
<div class="r" style="left:1451.2px;top:42px;width:143.0px;height:42px;background:#2d2d2d;"></div>
<svg class="r" style="left:1467.4px;top:54.9px;" width="15" height="15" viewBox="0 0 15 15"><ellipse cx="7.5" cy="7.5" rx="6.8" ry="2.5" transform="rotate(0 7.5 7.5)" stroke="#5c9fc8" stroke-width="0.95" fill="none"/><ellipse cx="7.5" cy="7.5" rx="6.8" ry="2.5" transform="rotate(60 7.5 7.5)" stroke="#5c9fc8" stroke-width="0.95" fill="none"/><ellipse cx="7.5" cy="7.5" rx="6.8" ry="2.5" transform="rotate(120 7.5 7.5)" stroke="#5c9fc8" stroke-width="0.95" fill="none"/></svg>
<div class="t" style="left:1490.30px;top:55.93px;font-size:15.2px;line-height:15.2px;color:#969696;font-family:'Liberation Sans', sans-serif;font-weight:normal;">App.tsx</div>
<div class="r" style="left:1595.2px;top:42px;width:246.79999999999995px;height:42px;background:#2d2d2d;"></div>
<svg class="r" style="left:1611.0px;top:54.9px;" width="15" height="15" viewBox="0 0 15 15"><ellipse cx="7.5" cy="7.5" rx="6.8" ry="2.5" transform="rotate(0 7.5 7.5)" stroke="#5c9fc8" stroke-width="0.95" fill="none"/><ellipse cx="7.5" cy="7.5" rx="6.8" ry="2.5" transform="rotate(60 7.5 7.5)" stroke="#5c9fc8" stroke-width="0.95" fill="none"/><ellipse cx="7.5" cy="7.5" rx="6.8" ry="2.5" transform="rotate(120 7.5 7.5)" stroke="#5c9fc8" stroke-width="0.95" fill="none"/></svg>
<div class="t" style="left:1634.30px;top:55.93px;font-size:15.2px;line-height:15.2px;color:#969696;font-family:'Liberation Sans', sans-serif;font-weight:normal;">index.tsx</div>
<div class="t" style="left:1700.50px;top:57.20px;font-size:13.7px;line-height:13.7px;color:#7f7f7f;font-family:'Liberation Sans', sans-serif;font-weight:normal;">...\GenerateTicket</div>
<svg class="r" style="left:1853px;top:53px;" width="18" height="18" viewBox="0 0 18 18"><rect x="1.5" y="1.5" width="15" height="15" rx="1.5" stroke="#cccccc" stroke-width="1.3" fill="none"/><path d="M9 1.5 V16.5" stroke="#cccccc" stroke-width="1.3"/></svg>
<div class="r" style="left:1885.0px;top:61.2px;width:2.6px;height:2.6px;background:#cccccc;border-radius:50%"></div>
<div class="r" style="left:1891.1px;top:61.2px;width:2.6px;height:2.6px;background:#cccccc;border-radius:50%"></div>
<div class="r" style="left:1897.2px;top:61.2px;width:2.6px;height:2.6px;background:#cccccc;border-radius:50%"></div>
<div class="t" style="left:390.20px;top:90.13px;font-size:15.2px;line-height:15.2px;color:#a9a9a9;font-family:'Liberation Sans', sans-serif;font-weight:normal;">src</div>
<div class="t" style="left:428.50px;top:90.13px;font-size:15.2px;line-height:15.2px;color:#a9a9a9;font-family:'Liberation Sans', sans-serif;font-weight:normal;">pages</div>
<div class="t" style="left:489.50px;top:90.13px;font-size:15.2px;line-height:15.2px;color:#a9a9a9;font-family:'Liberation Sans', sans-serif;font-weight:normal;">private</div>
<div class="t" style="left:556.00px;top:90.13px;font-size:15.2px;line-height:15.2px;color:#a9a9a9;font-family:'Liberation Sans', sans-serif;font-weight:normal;">MyEvents</div>
<div class="t" style="left:640.20px;top:90.13px;font-size:15.2px;line-height:15.2px;color:#a9a9a9;font-family:'Liberation Sans', sans-serif;font-weight:normal;">DigitalList</div>
<svg class="r" style="left:414.20000000000005px;top:90px;" width="10" height="15" viewBox="0 0 10 15"><path d="M2 1.6 L7.6 7.5 L2 13.4" stroke="#a9a9a9" stroke-width="1.15" fill="none"/></svg>
<svg class="r" style="left:473.20000000000005px;top:90px;" width="10" height="15" viewBox="0 0 10 15"><path d="M2 1.6 L7.6 7.5 L2 13.4" stroke="#a9a9a9" stroke-width="1.15" fill="none"/></svg>
<svg class="r" style="left:540.2px;top:90px;" width="10" height="15" viewBox="0 0 10 15"><path d="M2 1.6 L7.6 7.5 L2 13.4" stroke="#a9a9a9" stroke-width="1.15" fill="none"/></svg>
<svg class="r" style="left:626.0px;top:90px;" width="10" height="15" viewBox="0 0 10 15"><path d="M2 1.6 L7.6 7.5 L2 13.4" stroke="#a9a9a9" stroke-width="1.15" fill="none"/></svg>
<svg class="r" style="left:712.9px;top:90px;" width="10" height="15" viewBox="0 0 10 15"><path d="M2 1.6 L7.6 7.5 L2 13.4" stroke="#a9a9a9" stroke-width="1.15" fill="none"/></svg>
<svg class="r" style="left:730.5px;top:89.8px;" width="15" height="15" viewBox="0 0 15 15"><ellipse cx="7.5" cy="7.5" rx="6.8" ry="2.5" transform="rotate(0 7.5 7.5)" stroke="#5c9fc8" stroke-width="0.95" fill="none"/><ellipse cx="7.5" cy="7.5" rx="6.8" ry="2.5" transform="rotate(60 7.5 7.5)" stroke="#5c9fc8" stroke-width="0.95" fill="none"/><ellipse cx="7.5" cy="7.5" rx="6.8" ry="2.5" transform="rotate(120 7.5 7.5)" stroke="#5c9fc8" stroke-width="0.95" fill="none"/></svg>
<div class="t" style="left:752.50px;top:90.13px;font-size:15.2px;line-height:15.2px;color:#a9a9a9;font-family:'Liberation Sans', sans-serif;font-weight:normal;">index.tsx</div>
<svg class="r" style="left:817.5px;top:90px;" width="10" height="15" viewBox="0 0 10 15"><path d="M2 1.6 L7.6 7.5 L2 13.4" stroke="#a9a9a9" stroke-width="1.15" fill="none"/></svg>
<svg class="r" style="left:833px;top:90px;" width="17" height="14" viewBox="0 0 17 14"><path d="M4 1.5 H1.5 V12.5 H4 M13 1.5 H15.5 V12.5 H13" stroke="#8cc4f2" stroke-width="1.3" fill="none"/><ellipse cx="8.5" cy="7" rx="3.5" ry="2.5" transform="rotate(-30 8.5 7)" stroke="#8cc4f2" stroke-width="1.3" fill="none"/></svg>
<div class="t" style="left:854.50px;top:90.13px;font-size:15.2px;line-height:15.2px;color:#a9a9a9;font-family:'Liberation Sans', sans-serif;font-weight:normal;">DigitalList</div>
<div class="r" style="left:371px;top:110.4px;width:1412px;height:736px;overflow:hidden;">
<div class="r" style="left:81.30px;top:28.90px;width:1px;height:23.3px;background:#404040;"></div>
<div class="r" style="left:99.77px;top:28.90px;width:1px;height:23.3px;background:#404040;"></div>
<div class="r" style="left:81.30px;top:51.70px;width:1px;height:23.3px;background:#404040;"></div>
<div class="r" style="left:99.77px;top:51.70px;width:1px;height:23.3px;background:#404040;"></div>
<div class="r" style="left:81.30px;top:74.50px;width:1px;height:23.3px;background:#404040;"></div>
<div class="r" style="left:81.30px;top:97.30px;width:1px;height:23.3px;background:#404040;"></div>
<div class="r" style="left:81.30px;top:120.10px;width:1px;height:23.3px;background:#404040;"></div>
<div class="r" style="left:81.30px;top:142.90px;width:1px;height:23.3px;background:#404040;"></div>
<div class="r" style="left:99.77px;top:142.90px;width:1px;height:23.3px;background:#404040;"></div>
<div class="r" style="left:81.30px;top:165.70px;width:1px;height:23.3px;background:#404040;"></div>
<div class="r" style="left:99.77px;top:165.70px;width:1px;height:23.3px;background:#404040;"></div>
<div class="r" style="left:118.24px;top:165.70px;width:1px;height:23.3px;background:#404040;"></div>
<div class="r" style="left:81.30px;top:188.50px;width:1px;height:23.3px;background:#404040;"></div>
<div class="r" style="left:99.77px;top:188.50px;width:1px;height:23.3px;background:#404040;"></div>
<div class="r" style="left:118.24px;top:188.50px;width:1px;height:23.3px;background:#404040;"></div>
<div class="r" style="left:81.30px;top:211.30px;width:1px;height:23.3px;background:#404040;"></div>
<div class="r" style="left:99.77px;top:211.30px;width:1px;height:23.3px;background:#404040;"></div>
<div class="r" style="left:118.24px;top:211.30px;width:1px;height:23.3px;background:#404040;"></div>
<div class="r" style="left:136.72px;top:211.30px;width:1px;height:23.3px;background:#404040;"></div>
<div class="r" style="left:81.30px;top:234.10px;width:1px;height:23.3px;background:#404040;"></div>
<div class="r" style="left:99.77px;top:234.10px;width:1px;height:23.3px;background:#404040;"></div>
<div class="r" style="left:118.24px;top:234.10px;width:1px;height:23.3px;background:#404040;"></div>
<div class="r" style="left:136.72px;top:234.10px;width:1px;height:23.3px;background:#404040;"></div>
<div class="r" style="left:81.30px;top:256.90px;width:1px;height:23.3px;background:#404040;"></div>
<div class="r" style="left:99.77px;top:256.90px;width:1px;height:23.3px;background:#404040;"></div>
<div class="r" style="left:118.24px;top:256.90px;width:1px;height:23.3px;background:#404040;"></div>
<div class="r" style="left:136.72px;top:256.90px;width:1px;height:23.3px;background:#404040;"></div>
<div class="r" style="left:81.30px;top:279.70px;width:1px;height:23.3px;background:#404040;"></div>
<div class="r" style="left:99.77px;top:279.70px;width:1px;height:23.3px;background:#404040;"></div>
<div class="r" style="left:118.24px;top:279.70px;width:1px;height:23.3px;background:#404040;"></div>
<div class="r" style="left:136.72px;top:279.70px;width:1px;height:23.3px;background:#404040;"></div>
<div class="r" style="left:81.30px;top:302.50px;width:1px;height:23.3px;background:#404040;"></div>
<div class="r" style="left:99.77px;top:302.50px;width:1px;height:23.3px;background:#404040;"></div>
<div class="r" style="left:118.24px;top:302.50px;width:1px;height:23.3px;background:#404040;"></div>
<div class="r" style="left:136.72px;top:302.50px;width:1px;height:23.3px;background:#404040;"></div>
<div class="r" style="left:81.30px;top:325.30px;width:1px;height:23.3px;background:#404040;"></div>
<div class="r" style="left:99.77px;top:325.30px;width:1px;height:23.3px;background:#404040;"></div>
<div class="r" style="left:118.24px;top:325.30px;width:1px;height:23.3px;background:#404040;"></div>
<div class="r" style="left:81.30px;top:348.10px;width:1px;height:23.3px;background:#404040;"></div>
<div class="r" style="left:99.77px;top:348.10px;width:1px;height:23.3px;background:#404040;"></div>
<div class="r" style="left:118.24px;top:348.10px;width:1px;height:23.3px;background:#404040;"></div>
<div class="r" style="left:136.72px;top:348.10px;width:1px;height:23.3px;background:#404040;"></div>
<div class="r" style="left:81.30px;top:370.90px;width:1px;height:23.3px;background:#404040;"></div>
<div class="r" style="left:99.77px;top:370.90px;width:1px;height:23.3px;background:#404040;"></div>
<div class="r" style="left:118.24px;top:370.90px;width:1px;height:23.3px;background:#404040;"></div>
<div class="r" style="left:136.72px;top:370.90px;width:1px;height:23.3px;background:#404040;"></div>
<div class="r" style="left:81.30px;top:393.70px;width:1px;height:23.3px;background:#404040;"></div>
<div class="r" style="left:99.77px;top:393.70px;width:1px;height:23.3px;background:#404040;"></div>
<div class="r" style="left:118.24px;top:393.70px;width:1px;height:23.3px;background:#404040;"></div>
<div class="r" style="left:136.72px;top:393.70px;width:1px;height:23.3px;background:#404040;"></div>
<div class="r" style="left:81.30px;top:416.50px;width:1px;height:23.3px;background:#404040;"></div>
<div class="r" style="left:99.77px;top:416.50px;width:1px;height:23.3px;background:#404040;"></div>
<div class="r" style="left:81.30px;top:439.30px;width:1px;height:23.3px;background:#404040;"></div>
<div class="r" style="left:99.77px;top:439.30px;width:1px;height:23.3px;background:#404040;"></div>
<div class="r" style="left:81.30px;top:462.10px;width:1px;height:23.3px;background:#404040;"></div>
<div class="r" style="left:81.30px;top:484.90px;width:1px;height:23.3px;background:#404040;"></div>
<div class="r" style="left:81.30px;top:507.70px;width:1px;height:23.3px;background:#404040;"></div>
<div class="r" style="left:81.30px;top:530.50px;width:1px;height:23.3px;background:#404040;"></div>
<div class="r" style="left:99.77px;top:530.50px;width:1px;height:23.3px;background:#404040;"></div>
<div class="r" style="left:81.30px;top:553.30px;width:1px;height:23.3px;background:#404040;"></div>
<div class="r" style="left:99.77px;top:553.30px;width:1px;height:23.3px;background:#404040;"></div>
<div class="r" style="left:81.30px;top:576.10px;width:1px;height:23.3px;background:#404040;"></div>
<div class="r" style="left:99.77px;top:576.10px;width:1px;height:23.3px;background:#404040;"></div>
<div class="r" style="left:81.30px;top:598.90px;width:1px;height:23.3px;background:#404040;"></div>
<div class="r" style="left:81.30px;top:621.70px;width:1px;height:23.3px;background:#404040;"></div>
<div class="r" style="left:81.30px;top:644.50px;width:1px;height:23.3px;background:#404040;"></div>
<div class="r" style="left:81.30px;top:667.30px;width:1px;height:23.3px;background:#404040;"></div>
<div class="r" style="left:99.77px;top:667.30px;width:1px;height:23.3px;background:#404040;"></div>
<div class="r" style="left:81.30px;top:690.10px;width:1px;height:23.3px;background:#404040;"></div>
<div class="r" style="left:99.77px;top:690.10px;width:1px;height:23.3px;background:#404040;"></div>
<div class="r" style="left:81.30px;top:712.90px;width:1px;height:23.3px;background:#404040;"></div>
<div class="r" style="left:99.77px;top:712.90px;width:1px;height:23.3px;background:#404040;"></div>
<div class="code" style="left:-9.50px;width:60px;text-align:right;top:30.50px;font-size:15.4px;line-height:22.8px;color:#858585;">60</div>
<div class="code" style="left:81.30px;top:30.50px;font-size:15.4px;line-height:22.8px;color:#d4d4d4;">    <span style="color:#ffd700">}</span></div>
<div class="code" style="left:-9.50px;width:60px;text-align:right;top:53.30px;font-size:15.4px;line-height:22.8px;color:#858585;">61</div>
<div class="code" style="left:81.30px;top:53.30px;font-size:15.4px;line-height:22.8px;color:#d4d4d4;">    <span style="color:#dcdcaa">d</span><span style="color:#ffd700">()</span>;</div>
<div class="code" style="left:-9.50px;width:60px;text-align:right;top:76.10px;font-size:15.4px;line-height:22.8px;color:#858585;">62</div>
<div class="code" style="left:81.30px;top:76.10px;font-size:15.4px;line-height:22.8px;color:#d4d4d4;">  <span style="color:#179fff">}</span>, <span style="color:#179fff">[</span><span style="color:#9cdcfe">eventid</span><span style="color:#179fff">]</span><span style="color:#da70d6">)</span></div>
<div class="code" style="left:-9.50px;width:60px;text-align:right;top:98.90px;font-size:15.4px;line-height:22.8px;color:#858585;">63</div>
<div class="code" style="left:81.30px;top:98.90px;font-size:15.4px;line-height:22.8px;color:#d4d4d4;"></div>
<div class="code" style="left:-9.50px;width:60px;text-align:right;top:121.70px;font-size:15.4px;line-height:22.8px;color:#858585;">64</div>
<div class="code" style="left:81.30px;top:121.70px;font-size:15.4px;line-height:22.8px;color:#d4d4d4;">  <span style="color:#dcdcaa">useEffect</span><span style="color:#da70d6">(</span><span style="color:#179fff">()</span> <span style="color:#569cd6">=&gt;</span> <span style="color:#179fff">{</span></div>
<div class="code" style="left:-9.50px;width:60px;text-align:right;top:144.50px;font-size:15.4px;line-height:22.8px;color:#858585;">65</div>
<div class="code" style="left:81.30px;top:144.50px;font-size:15.4px;line-height:22.8px;color:#d4d4d4;">    <span style="color:#569cd6">const</span> <span style="color:#dcdcaa">fetch</span> = <span style="color:#569cd6">async</span> <span style="color:#ffd700">()</span> <span style="color:#569cd6">=&gt;</span> <span style="color:#ffd700">{</span></div>
<div class="code" style="left:-9.50px;width:60px;text-align:right;top:167.30px;font-size:15.4px;line-height:22.8px;color:#858585;">66</div>
<div class="code" style="left:81.30px;top:167.30px;font-size:15.4px;line-height:22.8px;color:#d4d4d4;">      <span style="color:#dcdcaa">setIsWorking</span><span style="color:#da70d6">(</span><span style="color:#569cd6">true</span><span style="color:#da70d6">)</span>;</div>
<div class="code" style="left:-9.50px;width:60px;text-align:right;top:190.10px;font-size:15.4px;line-height:22.8px;color:#858585;">67</div>
<div class="code" style="left:81.30px;top:190.10px;font-size:15.4px;line-height:22.8px;color:#d4d4d4;">      <span style="color:#9cdcfe">ticketApi</span>.<span style="color:#dcdcaa">list</span><span style="color:#da70d6">(</span><span style="color:#9cdcfe">eventid</span>, <span style="color:#179fff">{</span></div>
<div class="code" style="left:-9.50px;width:60px;text-align:right;top:212.90px;font-size:15.4px;line-height:22.8px;color:#858585;">68</div>
<div class="code" style="left:81.30px;top:212.90px;font-size:15.4px;line-height:22.8px;color:#d4d4d4;">        <span style="color:#9cdcfe">order</span>: <span style="color:#4fc1ff">paginationParams</span>.<span style="color:#9cdcfe">orderBy</span>,</div>
<div class="code" style="left:-9.50px;width:60px;text-align:right;top:235.70px;font-size:15.4px;line-height:22.8px;color:#858585;">69</div>
<div class="code" style="left:81.30px;top:235.70px;font-size:15.4px;line-height:22.8px;color:#d4d4d4;">        <span style="color:#9cdcfe">orderAsc</span>: <span style="color:#4fc1ff">paginationParams</span>.<span style="color:#9cdcfe">order</span> === <span style="color:#ce9178">&#x27;asc&#x27;</span>,</div>
<div class="code" style="left:-9.50px;width:60px;text-align:right;top:258.50px;font-size:15.4px;line-height:22.8px;color:#858585;">70</div>
<div class="code" style="left:81.30px;top:258.50px;font-size:15.4px;line-height:22.8px;color:#d4d4d4;">        <span style="color:#9cdcfe">filter</span>: <span style="color:#4fc1ff">paginationParams</span>.<span style="color:#9cdcfe">filters</span>,</div>
<div class="code" style="left:-9.50px;width:60px;text-align:right;top:281.30px;font-size:15.4px;line-height:22.8px;color:#858585;">71</div>
<div class="code" style="left:81.30px;top:281.30px;font-size:15.4px;line-height:22.8px;color:#d4d4d4;">        <span style="color:#9cdcfe">from</span>: <span style="color:#4fc1ff">paginationParams</span>.<span style="color:#9cdcfe">page</span> * <span style="color:#4fc1ff">paginationParams</span>.<span style="color:#9cdcfe">rowsPerPage</span>,</div>
<div class="code" style="left:-9.50px;width:60px;text-align:right;top:304.10px;font-size:15.4px;line-height:22.8px;color:#858585;">72</div>
<div class="code" style="left:81.30px;top:304.10px;font-size:15.4px;line-height:22.8px;color:#d4d4d4;">        <span style="color:#9cdcfe">length</span>: <span style="color:#4fc1ff">paginationParams</span>.<span style="color:#9cdcfe">rowsPerPage</span></div>
<div class="code" style="left:-9.50px;width:60px;text-align:right;top:326.90px;font-size:15.4px;line-height:22.8px;color:#858585;">73</div>
<div class="code" style="left:81.30px;top:326.90px;font-size:15.4px;line-height:22.8px;color:#d4d4d4;">      <span style="color:#179fff">}</span><span style="color:#da70d6">)</span></div>
<div class="code" style="left:-9.50px;width:60px;text-align:right;top:349.70px;font-size:15.4px;line-height:22.8px;color:#858585;">74</div>
<div class="code" style="left:81.30px;top:349.70px;font-size:15.4px;line-height:22.8px;color:#d4d4d4;">        .<span style="color:#dcdcaa">then</span><span style="color:#da70d6">(</span><span style="color:#dcdcaa">setData</span><span style="color:#da70d6">)</span></div>
<div class="code" style="left:-9.50px;width:60px;text-align:right;top:372.50px;font-size:15.4px;line-height:22.8px;color:#858585;">75</div>
<div class="code" style="left:81.30px;top:372.50px;font-size:15.4px;line-height:22.8px;color:#d4d4d4;">        .<span style="color:#dcdcaa">catch</span><span style="color:#da70d6">(</span><span style="color:#179fff">()</span> <span style="color:#569cd6">=&gt;</span> <span style="color:#dcdcaa">open</span><span style="color:#179fff">(</span><span style="color:#ffd700">{</span> <span style="color:#9cdcfe">open</span>: <span style="color:#569cd6">true</span>, <span style="color:#9cdcfe">severity</span>: <span style="color:#ce9178">&#x27;error&#x27;</span>, <span style="color:#9cdcfe">message</span>: <span style="color:#4fc1ff">Messages</span>.<span style="color:#4fc1ff">ERROR_COMM</span> <span style="color:#ffd700">}</span><span style="color:#179fff">)</span><span style="color:#da70d6">)</span></div>
<div class="code" style="left:-9.50px;width:60px;text-align:right;top:395.30px;font-size:15.4px;line-height:22.8px;color:#858585;">76</div>
<div class="code" style="left:81.30px;top:395.30px;font-size:15.4px;line-height:22.8px;color:#d4d4d4;">        .<span style="color:#dcdcaa">finally</span><span style="color:#da70d6">(</span><span style="color:#179fff">()</span> <span style="color:#569cd6">=&gt;</span> <span style="color:#dcdcaa">setIsWorking</span><span style="color:#179fff">(</span><span style="color:#569cd6">false</span><span style="color:#179fff">)</span><span style="color:#da70d6">)</span>;</div>
<div class="code" style="left:-9.50px;width:60px;text-align:right;top:418.10px;font-size:15.4px;line-height:22.8px;color:#858585;">77</div>
<div class="code" style="left:81.30px;top:418.10px;font-size:15.4px;line-height:22.8px;color:#d4d4d4;">    <span style="color:#ffd700">}</span></div>
<div class="code" style="left:-9.50px;width:60px;text-align:right;top:440.90px;font-size:15.4px;line-height:22.8px;color:#858585;">78</div>
<div class="code" style="left:81.30px;top:440.90px;font-size:15.4px;line-height:22.8px;color:#d4d4d4;">    <span style="color:#dcdcaa">fetch</span><span style="color:#ffd700">()</span>;</div>
<div class="code" style="left:-9.50px;width:60px;text-align:right;top:463.70px;font-size:15.4px;line-height:22.8px;color:#858585;">79</div>
<div class="code" style="left:81.30px;top:463.70px;font-size:15.4px;line-height:22.8px;color:#d4d4d4;">  <span style="color:#179fff">}</span>, <span style="color:#179fff">[</span><span style="color:#4fc1ff">paginationParams</span><span style="color:#179fff">]</span><span style="color:#da70d6">)</span></div>
<div class="code" style="left:-9.50px;width:60px;text-align:right;top:486.50px;font-size:15.4px;line-height:22.8px;color:#858585;">80</div>
<div class="code" style="left:81.30px;top:486.50px;font-size:15.4px;line-height:22.8px;color:#d4d4d4;"></div>
<div class="code" style="left:-9.50px;width:60px;text-align:right;top:509.30px;font-size:15.4px;line-height:22.8px;color:#858585;">81</div>
<div class="code" style="left:81.30px;top:509.30px;font-size:15.4px;line-height:22.8px;color:#d4d4d4;">  <span style="color:#569cd6">const</span> <span style="color:#dcdcaa">handleChangePage</span> = <span style="color:#da70d6">(</span><span style="color:#9cdcfe">event</span>: <span style="color:#4ec9b0">any</span>, <span style="color:#9cdcfe">newPage</span>: <span style="color:#4ec9b0">number</span><span style="color:#da70d6">)</span> <span style="color:#569cd6">=&gt;</span> <span style="color:#da70d6">{</span></div>
<div class="code" style="left:-9.50px;width:60px;text-align:right;top:532.10px;font-size:15.4px;line-height:22.8px;color:#858585;">82</div>
<div class="code" style="left:81.30px;top:532.10px;font-size:15.4px;line-height:22.8px;color:#d4d4d4;">    <span style="color:#569cd6">let</span> <span style="color:#179fff">{</span> <span style="color:#9cdcfe">page</span>, ...<span style="color:#9cdcfe">state</span> <span style="color:#179fff">}</span> = <span style="color:#4fc1ff">paginationParams</span>;</div>
<div class="code" style="left:-9.50px;width:60px;text-align:right;top:554.90px;font-size:15.4px;line-height:22.8px;color:#858585;">83</div>
<div class="code" style="left:81.30px;top:554.90px;font-size:15.4px;line-height:22.8px;color:#d4d4d4;">    <span style="color:#9cdcfe">page</span> = <span style="color:#9cdcfe">newPage</span>;</div>
<div class="code" style="left:-9.50px;width:60px;text-align:right;top:577.70px;font-size:15.4px;line-height:22.8px;color:#858585;">84</div>
<div class="code" style="left:81.30px;top:577.70px;font-size:15.4px;line-height:22.8px;color:#d4d4d4;">    <span style="color:#dcdcaa">setPagintationParams</span><span style="color:#179fff">(</span><span style="color:#ffd700">{</span> ...<span style="color:#9cdcfe">state</span>, <span style="color:#9cdcfe">page</span> <span style="color:#ffd700">}</span><span style="color:#179fff">)</span>;</div>
<div class="code" style="left:-9.50px;width:60px;text-align:right;top:600.50px;font-size:15.4px;line-height:22.8px;color:#858585;">85</div>
<div class="code" style="left:81.30px;top:600.50px;font-size:15.4px;line-height:22.8px;color:#d4d4d4;">  <span style="color:#da70d6">}</span>;</div>
<div class="code" style="left:-9.50px;width:60px;text-align:right;top:623.30px;font-size:15.4px;line-height:22.8px;color:#858585;">86</div>
<div class="code" style="left:81.30px;top:623.30px;font-size:15.4px;line-height:22.8px;color:#d4d4d4;"></div>
<div class="code" style="left:-9.50px;width:60px;text-align:right;top:646.10px;font-size:15.4px;line-height:22.8px;color:#858585;">87</div>
<div class="code" style="left:81.30px;top:646.10px;font-size:15.4px;line-height:22.8px;color:#d4d4d4;">  <span style="color:#569cd6">const</span> <span style="color:#dcdcaa">handleChangeRowsPerPage</span> = <span style="color:#da70d6">(</span><span style="color:#9cdcfe">event</span>: <span style="color:#4ec9b0">any</span><span style="color:#da70d6">)</span> <span style="color:#569cd6">=&gt;</span> <span style="color:#da70d6">{</span></div>
<div class="code" style="left:-9.50px;width:60px;text-align:right;top:668.90px;font-size:15.4px;line-height:22.8px;color:#858585;">88</div>
<div class="code" style="left:81.30px;top:668.90px;font-size:15.4px;line-height:22.8px;color:#d4d4d4;">    <span style="color:#569cd6">let</span> <span style="color:#179fff">{</span> <span style="color:#9cdcfe">page</span>, <span style="color:#9cdcfe">rowsPerPage</span>, ...<span style="color:#9cdcfe">state</span> <span style="color:#179fff">}</span> = <span style="color:#4fc1ff">paginationParams</span>;</div>
<div class="code" style="left:-9.50px;width:60px;text-align:right;top:691.70px;font-size:15.4px;line-height:22.8px;color:#858585;">89</div>
<div class="code" style="left:81.30px;top:691.70px;font-size:15.4px;line-height:22.8px;color:#d4d4d4;">    <span style="color:#9cdcfe">page</span> = <span style="color:#b5cea8">0</span>;</div>
<div class="code" style="left:-9.50px;width:60px;text-align:right;top:714.50px;font-size:15.4px;line-height:22.8px;color:#858585;">90</div>
<div class="code" style="left:81.30px;top:714.50px;font-size:15.4px;line-height:22.8px;color:#d4d4d4;">    <span style="color:#9cdcfe">rowsPerPage</span> = +<span style="color:#9cdcfe">event</span>.<span style="color:#9cdcfe">target</span>.<span style="color:#9cdcfe">value</span>;</div>
</div>
<div class="r" style="left:371px;top:110.4px;width:1412.5px;height:45.6px;background:#1e1e1e;box-shadow:0 3px 2px -2px #000;"></div>
<div class="code" style="left:361.50px;width:60px;text-align:right;top:111.20px;font-size:15.4px;line-height:22.8px;color:#858585;">31</div>
<div class="code" style="left:452.30px;top:111.20px;font-size:15.4px;line-height:22.8px;color:#d4d4d4;"><span style="color:#569cd6">const</span> <span style="color:#dcdcaa">DigitalList</span> = <span style="color:#ffd700">(</span><span style="color:#9cdcfe">props</span>: <span style="color:#4ec9b0">RouteProps</span><span style="color:#ffd700">)</span> <span style="color:#569cd6">=&gt;</span> <span style="color:#ffd700">{</span></div>
<div class="code" style="left:361.50px;width:60px;text-align:right;top:134.00px;font-size:15.4px;line-height:22.8px;color:#858585;">54</div>
<div class="code" style="left:452.30px;top:134.00px;font-size:15.4px;line-height:22.8px;color:#d4d4d4;">  <span style="color:#dcdcaa">useEffect</span><span style="color:#da70d6">(</span><span style="color:#179fff">()</span> <span style="color:#569cd6">=&gt;</span> <span style="color:#179fff">{</span></div>
<div class="r" style="left:1771px;top:156px;width:12.5px;height:690px;background:linear-gradient(90deg,rgba(0,0,0,0) 0%,rgba(0,0,0,0.25) 100%);"></div>
<div class="r" style="left:1783px;top:110.4px;width:1px;height:735.6px;background:#141414;"></div>
<svg class="r" style="left:1792px;top:109.6px;opacity:0.62;" width="113" height="350" viewBox="0 0 113 350"><rect x="0.0" y="0.2" width="6.0" height="1.5" fill="#c586c0"/><rect x="7.0" y="0.2" width="1.0" height="1.5" fill="#d4d4d4"/><rect x="9.0" y="0.2" width="9.0" height="1.5" fill="#9cdcfe"/><rect x="18.0" y="0.2" width="1.0" height="1.5" fill="#d4d4d4"/><rect x="20.0" y="0.2" width="8.0" height="1.5" fill="#9cdcfe"/><rect x="29.0" y="0.2" width="1.0" height="1.5" fill="#d4d4d4"/><rect x="31.0" y="0.2" width="4.0" height="1.5" fill="#c586c0"/><rect x="36.0" y="0.2" width="7.0" height="1.5" fill="#ce9178"/><rect x="43.0" y="0.2" width="1.0" height="1.5" fill="#d4d4d4"/><rect x="0.0" y="2.2" width="6.0" height="1.5" fill="#c586c0"/><rect x="7.0" y="2.2" width="1.0" height="1.5" fill="#d4d4d4"/><rect x="9.0" y="2.2" width="3.0" height="1.5" fill="#9cdcfe"/><rect x="12.0" y="2.2" width="1.0" height="1.5" fill="#d4d4d4"/><rect x="14.0" y="2.2" width="6.0" height="1.5" fill="#9cdcfe"/><rect x="20.0" y="2.2" width="1.0" height="1.5" fill="#d4d4d4"/><rect x="22.0" y="2.2" width="4.0" height="1.5" fill="#9cdcfe"/><rect x="26.0" y="2.2" width="1.0" height="1.5" fill="#d4d4d4"/><rect x="28.0" y="2.2" width="10.0" height="1.5" fill="#9cdcfe"/><rect x="38.0" y="2.2" width="1.0" height="1.5" fill="#d4d4d4"/><rect x="40.0" y="2.2" width="5.0" height="1.5" fill="#9cdcfe"/><rect x="45.0" y="2.2" width="1.0" height="1.5" fill="#d4d4d4"/><rect x="47.0" y="2.2" width="5.0" height="1.5" fill="#9cdcfe"/><rect x="52.0" y="2.2" width="1.0" height="1.5" fill="#d4d4d4"/><rect x="54.0" y="2.2" width="9.0" height="1.5" fill="#9cdcfe"/><rect x="63.0" y="2.2" width="1.0" height="1.5" fill="#d4d4d4"/><rect x="65.0" y="2.2" width="9.0" height="1.5" fill="#9cdcfe"/><rect x="74.0" y="2.2" width="1.0" height="1.5" fill="#d4d4d4"/><rect x="76.0" y="2.2" width="14.0" height="1.5" fill="#9cdcfe"/><rect x="90.0" y="2.2" width="1.0" height="1.5" fill="#d4d4d4"/><rect x="92.0" y="2.2" width="9.0" height="1.5" fill="#9cdcfe"/><rect x="101.0" y="2.2" width="1.0" height="1.5" fill="#d4d4d4"/><rect x="103.0" y="2.2" width="8.0" height="1.5" fill="#9cdcfe"/><rect x="111.0" y="2.2" width="1.0" height="1.5" fill="#d4d4d4"/><rect x="0.0" y="4.2" width="6.0" height="1.5" fill="#c586c0"/><rect x="7.0" y="4.2" width="1.0" height="1.5" fill="#d4d4d4"/><rect x="9.0" y="4.2" width="10.0" height="1.5" fill="#9cdcfe"/><rect x="19.0" y="4.2" width="1.0" height="1.5" fill="#d4d4d4"/><rect x="21.0" y="4.2" width="11.0" height="1.5" fill="#9cdcfe"/><rect x="32.0" y="4.2" width="1.0" height="1.5" fill="#d4d4d4"/><rect x="34.0" y="4.2" width="9.0" height="1.5" fill="#9cdcfe"/><rect x="44.0" y="4.2" width="1.0" height="1.5" fill="#d4d4d4"/><rect x="46.0" y="4.2" width="4.0" height="1.5" fill="#c586c0"/><rect x="51.0" y="4.2" width="18.0" height="1.5" fill="#ce9178"/><rect x="69.0" y="4.2" width="1.0" height="1.5" fill="#d4d4d4"/><rect x="0.0" y="6.2" width="6.0" height="1.5" fill="#c586c0"/><rect x="7.0" y="6.2" width="1.0" height="1.5" fill="#d4d4d4"/><rect x="9.0" y="6.2" width="14.0" height="1.5" fill="#9cdcfe"/><rect x="24.0" y="6.2" width="1.0" height="1.5" fill="#d4d4d4"/><rect x="26.0" y="6.2" width="4.0" height="1.5" fill="#c586c0"/><rect x="31.0" y="6.2" width="15.0" height="1.5" fill="#ce9178"/><rect x="46.0" y="6.2" width="1.0" height="1.5" fill="#d4d4d4"/><rect x="0.0" y="8.2" width="6.0" height="1.5" fill="#c586c0"/><rect x="7.0" y="8.2" width="9.0" height="1.5" fill="#9cdcfe"/><rect x="17.0" y="8.2" width="4.0" height="1.5" fill="#c586c0"/><rect x="22.0" y="8.2" width="22.0" height="1.5" fill="#ce9178"/><rect x="44.0" y="8.2" width="1.0" height="1.5" fill="#d4d4d4"/><rect x="0.0" y="10.2" width="6.0" height="1.5" fill="#c586c0"/><rect x="7.0" y="10.2" width="1.0" height="1.5" fill="#d4d4d4"/><rect x="9.0" y="10.2" width="9.0" height="1.5" fill="#9cdcfe"/><rect x="19.0" y="10.2" width="1.0" height="1.5" fill="#d4d4d4"/><rect x="21.0" y="10.2" width="4.0" height="1.5" fill="#c586c0"/><rect x="26.0" y="10.2" width="15.0" height="1.5" fill="#ce9178"/><rect x="41.0" y="10.2" width="1.0" height="1.5" fill="#d4d4d4"/><rect x="0.0" y="12.2" width="6.0" height="1.5" fill="#c586c0"/><rect x="7.0" y="12.2" width="14.0" height="1.5" fill="#9cdcfe"/><rect x="21.0" y="12.2" width="1.0" height="1.5" fill="#d4d4d4"/><rect x="23.0" y="12.2" width="1.0" height="1.5" fill="#d4d4d4"/><rect x="25.0" y="12.2" width="12.0" height="1.5" fill="#9cdcfe"/><rect x="38.0" y="12.2" width="1.0" height="1.5" fill="#d4d4d4"/><rect x="40.0" y="12.2" width="4.0" height="1.5" fill="#c586c0"/><rect x="45.0" y="12.2" width="27.0" height="1.5" fill="#ce9178"/><rect x="72.0" y="12.2" width="1.0" height="1.5" fill="#d4d4d4"/><rect x="0.0" y="14.2" width="6.0" height="1.5" fill="#c586c0"/><rect x="7.0" y="14.2" width="1.0" height="1.5" fill="#d4d4d4"/><rect x="9.0" y="14.2" width="8.0" height="1.5" fill="#9cdcfe"/><rect x="18.0" y="14.2" width="1.0" height="1.5" fill="#d4d4d4"/><rect x="20.0" y="14.2" width="4.0" height="1.5" fill="#c586c0"/><rect x="25.0" y="14.2" width="18.0" height="1.5" fill="#ce9178"/><rect x="43.0" y="14.2" width="1.0" height="1.5" fill="#d4d4d4"/><rect x="0.0" y="16.2" width="6.0" height="1.5" fill="#c586c0"/><rect x="7.0" y="16.2" width="1.0" height="1.5" fill="#d4d4d4"/><rect x="9.0" y="16.2" width="11.0" height="1.5" fill="#9cdcfe"/><rect x="20.0" y="16.2" width="1.0" height="1.5" fill="#d4d4d4"/><rect x="22.0" y="16.2" width="16.0" height="1.5" fill="#9cdcfe"/><rect x="39.0" y="16.2" width="1.0" height="1.5" fill="#d4d4d4"/><rect x="41.0" y="16.2" width="4.0" height="1.5" fill="#c586c0"/><rect x="46.0" y="16.2" width="26.0" height="1.5" fill="#ce9178"/><rect x="72.0" y="16.2" width="1.0" height="1.5" fill="#d4d4d4"/><rect x="0.0" y="18.2" width="6.0" height="1.5" fill="#c586c0"/><rect x="7.0" y="18.2" width="1.0" height="1.5" fill="#d4d4d4"/><rect x="9.0" y="18.2" width="16.0" height="1.5" fill="#9cdcfe"/><rect x="26.0" y="18.2" width="1.0" height="1.5" fill="#d4d4d4"/><rect x="28.0" y="18.2" width="4.0" height="1.5" fill="#c586c0"/><rect x="33.0" y="18.2" width="19.0" height="1.5" fill="#ce9178"/><rect x="52.0" y="18.2" width="1.0" height="1.5" fill="#d4d4d4"/><rect x="0.0" y="20.2" width="6.0" height="1.5" fill="#c586c0"/><rect x="7.0" y="20.2" width="1.0" height="1.5" fill="#d4d4d4"/><rect x="9.0" y="20.2" width="6.0" height="1.5" fill="#9cdcfe"/><rect x="15.0" y="20.2" width="1.0" height="1.5" fill="#d4d4d4"/><rect x="17.0" y="20.2" width="10.0" height="1.5" fill="#9cdcfe"/><rect x="28.0" y="20.2" width="1.0" height="1.5" fill="#d4d4d4"/><rect x="30.0" y="20.2" width="4.0" height="1.5" fill="#c586c0"/><rect x="35.0" y="20.2" width="15.0" height="1.5" fill="#ce9178"/><rect x="50.0" y="20.2" width="1.0" height="1.5" fill="#d4d4d4"/><rect x="0.0" y="22.2" width="6.0" height="1.5" fill="#c586c0"/><rect x="7.0" y="22.2" width="12.0" height="1.5" fill="#9cdcfe"/><rect x="20.0" y="22.2" width="4.0" height="1.5" fill="#c586c0"/><rect x="25.0" y="22.2" width="21.0" height="1.5" fill="#ce9178"/><rect x="46.0" y="22.2" width="1.0" height="1.5" fill="#d4d4d4"/><rect x="0.0" y="24.2" width="6.0" height="1.5" fill="#c586c0"/><rect x="7.0" y="24.2" width="10.0" height="1.5" fill="#9cdcfe"/><rect x="18.0" y="24.2" width="4.0" height="1.5" fill="#c586c0"/><rect x="23.0" y="24.2" width="19.0" height="1.5" fill="#ce9178"/><rect x="42.0" y="24.2" width="1.0" height="1.5" fill="#d4d4d4"/><rect x="0.0" y="26.2" width="6.0" height="1.5" fill="#c586c0"/><rect x="7.0" y="26.2" width="1.0" height="1.5" fill="#d4d4d4"/><rect x="9.0" y="26.2" width="10.0" height="1.5" fill="#9cdcfe"/><rect x="19.0" y="26.2" width="1.0" height="1.5" fill="#d4d4d4"/><rect x="21.0" y="26.2" width="10.0" height="1.5" fill="#9cdcfe"/><rect x="32.0" y="26.2" width="1.0" height="1.5" fill="#d4d4d4"/><rect x="34.0" y="26.2" width="4.0" height="1.5" fill="#c586c0"/><rect x="39.0" y="26.2" width="14.0" height="1.5" fill="#ce9178"/><rect x="53.0" y="26.2" width="1.0" height="1.5" fill="#d4d4d4"/><rect x="0.0" y="28.2" width="6.0" height="1.5" fill="#c586c0"/><rect x="7.0" y="28.2" width="22.0" height="1.5" fill="#9cdcfe"/><rect x="30.0" y="28.2" width="4.0" height="1.5" fill="#c586c0"/><rect x="35.0" y="28.2" width="18.0" height="1.5" fill="#ce9178"/><rect x="53.0" y="28.2" width="1.0" height="1.5" fill="#d4d4d4"/><rect x="0.0" y="30.2" width="6.0" height="1.5" fill="#c586c0"/><rect x="7.0" y="30.2" width="17.0" height="1.5" fill="#9cdcfe"/><rect x="25.0" y="30.2" width="4.0" height="1.5" fill="#c586c0"/><rect x="30.0" y="30.2" width="22.0" height="1.5" fill="#ce9178"/><rect x="52.0" y="30.2" width="1.0" height="1.5" fill="#d4d4d4"/><rect x="0.0" y="32.2" width="6.0" height="1.5" fill="#c586c0"/><rect x="7.0" y="32.2" width="1.0" height="1.5" fill="#d4d4d4"/><rect x="9.0" y="32.2" width="15.0" height="1.5" fill="#9cdcfe"/><rect x="24.0" y="32.2" width="1.0" height="1.5" fill="#d4d4d4"/><rect x="26.0" y="32.2" width="14.0" height="1.5" fill="#9cdcfe"/><rect x="41.0" y="32.2" width="1.0" height="1.5" fill="#d4d4d4"/><rect x="43.0" y="32.2" width="4.0" height="1.5" fill="#c586c0"/><rect x="48.0" y="32.2" width="9.0" height="1.5" fill="#ce9178"/><rect x="57.0" y="32.2" width="1.0" height="1.5" fill="#d4d4d4"/><rect x="0.0" y="34.2" width="6.0" height="1.5" fill="#c586c0"/><rect x="7.0" y="34.2" width="13.0" height="1.5" fill="#9cdcfe"/><rect x="21.0" y="34.2" width="4.0" height="1.5" fill="#c586c0"/><rect x="26.0" y="34.2" width="26.0" height="1.5" fill="#ce9178"/><rect x="52.0" y="34.2" width="1.0" height="1.5" fill="#d4d4d4"/><rect x="0.0" y="36.2" width="6.0" height="1.5" fill="#c586c0"/><rect x="7.0" y="36.2" width="1.0" height="1.5" fill="#d4d4d4"/><rect x="9.0" y="36.2" width="8.0" height="1.5" fill="#9cdcfe"/><rect x="18.0" y="36.2" width="1.0" height="1.5" fill="#d4d4d4"/><rect x="20.0" y="36.2" width="4.0" height="1.5" fill="#c586c0"/><rect x="25.0" y="36.2" width="14.0" height="1.5" fill="#ce9178"/><rect x="39.0" y="36.2" width="1.0" height="1.5" fill="#d4d4d4"/><rect x="0.0" y="40.2" width="5.0" height="1.5" fill="#569cd6"/><rect x="6.0" y="40.2" width="9.0" height="1.5" fill="#9cdcfe"/><rect x="16.0" y="40.2" width="1.0" height="1.5" fill="#d4d4d4"/><rect x="18.0" y="40.2" width="1.0" height="1.5" fill="#d4d4d4"/><rect x="2.0" y="42.2" width="1.0" height="1.5" fill="#d4d4d4"/><rect x="4.0" y="42.2" width="2.0" height="1.5" fill="#9cdcfe"/><rect x="6.0" y="42.2" width="1.0" height="1.5" fill="#d4d4d4"/><rect x="8.0" y="42.2" width="6.0" height="1.5" fill="#ce9178"/><rect x="14.0" y="42.2" width="1.0" height="1.5" fill="#d4d4d4"/><rect x="16.0" y="42.2" width="5.0" height="1.5" fill="#9cdcfe"/><rect x="21.0" y="42.2" width="1.0" height="1.5" fill="#d4d4d4"/><rect x="23.0" y="42.2" width="8.0" height="1.5" fill="#ce9178"/><rect x="31.0" y="42.2" width="1.0" height="1.5" fill="#d4d4d4"/><rect x="33.0" y="42.2" width="8.0" height="1.5" fill="#9cdcfe"/><rect x="41.0" y="42.2" width="1.0" height="1.5" fill="#d4d4d4"/><rect x="43.0" y="42.2" width="4.0" height="1.5" fill="#569cd6"/><rect x="47.0" y="42.2" width="1.0" height="1.5" fill="#d4d4d4"/><rect x="49.0" y="42.2" width="5.0" height="1.5" fill="#9cdcfe"/><rect x="54.0" y="42.2" width="1.0" height="1.5" fill="#d4d4d4"/><rect x="56.0" y="42.2" width="5.0" height="1.5" fill="#ce9178"/><rect x="62.0" y="42.2" width="2.0" height="1.5" fill="#d4d4d4"/><rect x="2.0" y="44.2" width="1.0" height="1.5" fill="#d4d4d4"/><rect x="4.0" y="44.2" width="2.0" height="1.5" fill="#9cdcfe"/><rect x="6.0" y="44.2" width="1.0" height="1.5" fill="#d4d4d4"/><rect x="8.0" y="44.2" width="7.0" height="1.5" fill="#ce9178"/><rect x="15.0" y="44.2" width="1.0" height="1.5" fill="#d4d4d4"/><rect x="17.0" y="44.2" width="5.0" height="1.5" fill="#9cdcfe"/><rect x="22.0" y="44.2" width="1.0" height="1.5" fill="#d4d4d4"/><rect x="24.0" y="44.2" width="7.0" height="1.5" fill="#ce9178"/><rect x="31.0" y="44.2" width="1.0" height="1.5" fill="#d4d4d4"/><rect x="33.0" y="44.2" width="8.0" height="1.5" fill="#9cdcfe"/><rect x="41.0" y="44.2" width="1.0" height="1.5" fill="#d4d4d4"/><rect x="43.0" y="44.2" width="4.0" height="1.5" fill="#569cd6"/><rect x="47.0" y="44.2" width="1.0" height="1.5" fill="#d4d4d4"/><rect x="49.0" y="44.2" width="5.0" height="1.5" fill="#9cdcfe"/><rect x="54.0" y="44.2" width="1.0" height="1.5" fill="#d4d4d4"/><rect x="56.0" y="44.2" width="5.0" height="1.5" fill="#ce9178"/><rect x="62.0" y="44.2" width="2.0" height="1.5" fill="#d4d4d4"/><rect x="2.0" y="46.2" width="1.0" height="1.5" fill="#d4d4d4"/><rect x="4.0" y="46.2" width="2.0" height="1.5" fill="#9cdcfe"/><rect x="6.0" y="46.2" width="1.0" height="1.5" fill="#d4d4d4"/><rect x="8.0" y="46.2" width="5.0" height="1.5" fill="#ce9178"/><rect x="13.0" y="46.2" width="1.0" height="1.5" fill="#d4d4d4"/><rect x="15.0" y="46.2" width="5.0" height="1.5" fill="#9cdcfe"/><rect x="20.0" y="46.2" width="1.0" height="1.5" fill="#d4d4d4"/><rect x="22.0" y="46.2" width="5.0" height="1.5" fill="#ce9178"/><rect x="27.0" y="46.2" width="1.0" height="1.5" fill="#d4d4d4"/><rect x="29.0" y="46.2" width="8.0" height="1.5" fill="#9cdcfe"/><rect x="37.0" y="46.2" width="1.0" height="1.5" fill="#d4d4d4"/><rect x="39.0" y="46.2" width="4.0" height="1.5" fill="#569cd6"/><rect x="43.0" y="46.2" width="1.0" height="1.5" fill="#d4d4d4"/><rect x="45.0" y="46.2" width="5.0" height="1.5" fill="#9cdcfe"/><rect x="50.0" y="46.2" width="1.0" height="1.5" fill="#d4d4d4"/><rect x="52.0" y="46.2" width="5.0" height="1.5" fill="#ce9178"/><rect x="58.0" y="46.2" width="2.0" height="1.5" fill="#d4d4d4"/><rect x="2.0" y="48.2" width="1.0" height="1.5" fill="#d4d4d4"/><rect x="4.0" y="48.2" width="2.0" height="1.5" fill="#9cdcfe"/><rect x="6.0" y="48.2" width="1.0" height="1.5" fill="#d4d4d4"/><rect x="8.0" y="48.2" width="6.0" height="1.5" fill="#ce9178"/><rect x="14.0" y="48.2" width="1.0" height="1.5" fill="#d4d4d4"/><rect x="16.0" y="48.2" width="5.0" height="1.5" fill="#9cdcfe"/><rect x="21.0" y="48.2" width="1.0" height="1.5" fill="#d4d4d4"/><rect x="23.0" y="48.2" width="6.0" height="1.5" fill="#ce9178"/><rect x="29.0" y="48.2" width="1.0" height="1.5" fill="#d4d4d4"/><rect x="31.0" y="48.2" width="8.0" height="1.5" fill="#9cdcfe"/><rect x="39.0" y="48.2" width="1.0" height="1.5" fill="#d4d4d4"/><rect x="41.0" y="48.2" width="5.0" height="1.5" fill="#569cd6"/><rect x="46.0" y="48.2" width="1.0" height="1.5" fill="#d4d4d4"/><rect x="48.0" y="48.2" width="5.0" height="1.5" fill="#9cdcfe"/><rect x="53.0" y="48.2" width="1.0" height="1.5" fill="#d4d4d4"/><rect x="55.0" y="48.2" width="5.0" height="1.5" fill="#ce9178"/><rect x="61.0" y="48.2" width="2.0" height="1.5" fill="#d4d4d4"/><rect x="2.0" y="50.2" width="1.0" height="1.5" fill="#d4d4d4"/><rect x="4.0" y="50.2" width="2.0" height="1.5" fill="#9cdcfe"/><rect x="6.0" y="50.2" width="1.0" height="1.5" fill="#d4d4d4"/><rect x="8.0" y="50.2" width="6.0" height="1.5" fill="#ce9178"/><rect x="14.0" y="50.2" width="1.0" height="1.5" fill="#d4d4d4"/><rect x="16.0" y="50.2" width="5.0" height="1.5" fill="#9cdcfe"/><rect x="21.0" y="50.2" width="1.0" height="1.5" fill="#d4d4d4"/><rect x="23.0" y="50.2" width="7.0" height="1.5" fill="#ce9178"/><rect x="30.0" y="50.2" width="1.0" height="1.5" fill="#d4d4d4"/><rect x="32.0" y="50.2" width="8.0" height="1.5" fill="#9cdcfe"/><rect x="40.0" y="50.2" width="1.0" height="1.5" fill="#d4d4d4"/><rect x="42.0" y="50.2" width="4.0" height="1.5" fill="#569cd6"/><rect x="46.0" y="50.2" width="1.0" height="1.5" fill="#d4d4d4"/><rect x="48.0" y="50.2" width="5.0" height="1.5" fill="#9cdcfe"/><rect x="53.0" y="50.2" width="1.0" height="1.5" fill="#d4d4d4"/><rect x="55.0" y="50.2" width="5.0" height="1.5" fill="#ce9178"/><rect x="61.0" y="50.2" width="2.0" height="1.5" fill="#d4d4d4"/><rect x="2.0" y="52.2" width="1.0" height="1.5" fill="#d4d4d4"/><rect x="4.0" y="52.2" width="2.0" height="1.5" fill="#9cdcfe"/><rect x="6.0" y="52.2" width="1.0" height="1.5" fill="#d4d4d4"/><rect x="8.0" y="52.2" width="8.0" height="1.5" fill="#ce9178"/><rect x="16.0" y="52.2" width="1.0" height="1.5" fill="#d4d4d4"/><rect x="18.0" y="52.2" width="5.0" height="1.5" fill="#9cdcfe"/><rect x="23.0" y="52.2" width="1.0" height="1.5" fill="#d4d4d4"/><rect x="25.0" y="52.2" width="8.0" height="1.5" fill="#ce9178"/><rect x="33.0" y="52.2" width="1.0" height="1.5" fill="#d4d4d4"/><rect x="35.0" y="52.2" width="8.0" height="1.5" fill="#9cdcfe"/><rect x="43.0" y="52.2" width="1.0" height="1.5" fill="#d4d4d4"/><rect x="45.0" y="52.2" width="5.0" height="1.5" fill="#569cd6"/><rect x="50.0" y="52.2" width="1.0" height="1.5" fill="#d4d4d4"/><rect x="52.0" y="52.2" width="5.0" height="1.5" fill="#9cdcfe"/><rect x="57.0" y="52.2" width="1.0" height="1.5" fill="#d4d4d4"/><rect x="59.0" y="52.2" width="5.0" height="1.5" fill="#ce9178"/><rect x="65.0" y="52.2" width="2.0" height="1.5" fill="#d4d4d4"/><rect x="2.0" y="54.2" width="1.0" height="1.5" fill="#d4d4d4"/><rect x="4.0" y="54.2" width="2.0" height="1.5" fill="#9cdcfe"/><rect x="6.0" y="54.2" width="1.0" height="1.5" fill="#d4d4d4"/><rect x="8.0" y="54.2" width="9.0" height="1.5" fill="#ce9178"/><rect x="17.0" y="54.2" width="1.0" height="1.5" fill="#d4d4d4"/><rect x="19.0" y="54.2" width="5.0" height="1.5" fill="#9cdcfe"/><rect x="24.0" y="54.2" width="1.0" height="1.5" fill="#d4d4d4"/><rect x="26.0" y="54.2" width="2.0" height="1.5" fill="#ce9178"/><rect x="28.0" y="54.2" width="1.0" height="1.5" fill="#d4d4d4"/><rect x="30.0" y="54.2" width="8.0" height="1.5" fill="#9cdcfe"/><rect x="38.0" y="54.2" width="1.0" height="1.5" fill="#d4d4d4"/><rect x="40.0" y="54.2" width="5.0" height="1.5" fill="#569cd6"/><rect x="45.0" y="54.2" width="1.0" height="1.5" fill="#d4d4d4"/><rect x="47.0" y="54.2" width="5.0" height="1.5" fill="#9cdcfe"/><rect x="52.0" y="54.2" width="1.0" height="1.5" fill="#d4d4d4"/><rect x="54.0" y="54.2" width="4.0" height="1.5" fill="#ce9178"/><rect x="59.0" y="54.2" width="2.0" height="1.5" fill="#d4d4d4"/><rect x="0.0" y="56.2" width="2.0" height="1.5" fill="#d4d4d4"/><rect x="0.0" y="60.2" width="5.0" height="1.5" fill="#569cd6"/><rect x="6.0" y="60.2" width="11.0" height="1.5" fill="#9cdcfe"/><rect x="18.0" y="60.2" width="1.0" height="1.5" fill="#d4d4d4"/><rect x="20.0" y="60.2" width="1.0" height="1.5" fill="#d4d4d4"/><rect x="21.0" y="60.2" width="5.0" height="1.5" fill="#9cdcfe"/><rect x="26.0" y="60.2" width="1.0" height="1.5" fill="#d4d4d4"/><rect x="28.0" y="60.2" width="10.0" height="1.5" fill="#4ec9b0"/><rect x="38.0" y="60.2" width="1.0" height="1.5" fill="#d4d4d4"/><rect x="40.0" y="60.2" width="2.0" height="1.5" fill="#d4d4d4"/><rect x="43.0" y="60.2" width="1.0" height="1.5" fill="#d4d4d4"/><rect x="2.0" y="62.2" width="5.0" height="1.5" fill="#569cd6"/><rect x="8.0" y="62.2" width="1.0" height="1.5" fill="#d4d4d4"/><rect x="10.0" y="62.2" width="7.0" height="1.5" fill="#9cdcfe"/><rect x="18.0" y="62.2" width="1.0" height="1.5" fill="#d4d4d4"/><rect x="20.0" y="62.2" width="1.0" height="1.5" fill="#d4d4d4"/><rect x="22.0" y="62.2" width="9.0" height="1.5" fill="#dcdcaa"/><rect x="31.0" y="62.2" width="3.0" height="1.5" fill="#d4d4d4"/><rect x="2.0" y="64.2" width="5.0" height="1.5" fill="#569cd6"/><rect x="8.0" y="64.2" width="1.0" height="1.5" fill="#d4d4d4"/><rect x="10.0" y="64.2" width="1.0" height="1.5" fill="#9cdcfe"/><rect x="12.0" y="64.2" width="1.0" height="1.5" fill="#d4d4d4"/><rect x="14.0" y="64.2" width="1.0" height="1.5" fill="#d4d4d4"/><rect x="16.0" y="64.2" width="14.0" height="1.5" fill="#dcdcaa"/><rect x="30.0" y="64.2" width="3.0" height="1.5" fill="#d4d4d4"/><rect x="2.0" y="66.2" width="5.0" height="1.5" fill="#569cd6"/><rect x="8.0" y="66.2" width="8.0" height="1.5" fill="#9cdcfe"/><rect x="17.0" y="66.2" width="1.0" height="1.5" fill="#d4d4d4"/><rect x="19.0" y="66.2" width="11.0" height="1.5" fill="#dcdcaa"/><rect x="30.0" y="66.2" width="3.0" height="1.5" fill="#d4d4d4"/><rect x="2.0" y="68.2" width="5.0" height="1.5" fill="#569cd6"/><rect x="8.0" y="68.2" width="1.0" height="1.5" fill="#d4d4d4"/><rect x="10.0" y="68.2" width="4.0" height="1.5" fill="#9cdcfe"/><rect x="15.0" y="68.2" width="1.0" height="1.5" fill="#d4d4d4"/><rect x="17.0" y="68.2" width="1.0" height="1.5" fill="#d4d4d4"/><rect x="19.0" y="68.2" width="11.0" height="1.5" fill="#dcdcaa"/><rect x="30.0" y="68.2" width="3.0" height="1.5" fill="#d4d4d4"/><rect x="2.0" y="70.2" width="5.0" height="1.5" fill="#569cd6"/><rect x="8.0" y="70.2" width="1.0" height="1.5" fill="#d4d4d4"/><rect x="9.0" y="70.2" width="9.0" height="1.5" fill="#9cdcfe"/><rect x="18.0" y="70.2" width="1.0" height="1.5" fill="#d4d4d4"/><rect x="20.0" y="70.2" width="12.0" height="1.5" fill="#9cdcfe"/><rect x="32.0" y="70.2" width="1.0" height="1.5" fill="#d4d4d4"/><rect x="34.0" y="70.2" width="1.0" height="1.5" fill="#d4d4d4"/><rect x="36.0" y="70.2" width="8.0" height="1.5" fill="#9cdcfe"/><rect x="44.0" y="70.2" width="1.0" height="1.5" fill="#d4d4d4"/><rect x="45.0" y="70.2" width="7.0" height="1.5" fill="#9cdcfe"/><rect x="52.0" y="70.2" width="2.0" height="1.5" fill="#d4d4d4"/><rect x="54.0" y="70.2" width="5.0" height="1.5" fill="#569cd6"/><rect x="59.0" y="70.2" width="2.0" height="1.5" fill="#d4d4d4"/><rect x="2.0" y="72.2" width="5.0" height="1.5" fill="#569cd6"/><rect x="8.0" y="72.2" width="1.0" height="1.5" fill="#d4d4d4"/><rect x="9.0" y="72.2" width="4.0" height="1.5" fill="#9cdcfe"/><rect x="13.0" y="72.2" width="1.0" height="1.5" fill="#d4d4d4"/><rect x="15.0" y="72.2" width="7.0" height="1.5" fill="#9cdcfe"/><rect x="22.0" y="72.2" width="1.0" height="1.5" fill="#d4d4d4"/><rect x="24.0" y="72.2" width="1.0" height="1.5" fill="#d4d4d4"/><rect x="26.0" y="72.2" width="8.0" height="1.5" fill="#9cdcfe"/><rect x="34.0" y="72.2" width="1.0" height="1.5" fill="#d4d4d4"/><rect x="35.0" y="72.2" width="3.0" height="1.5" fill="#9cdcfe"/><rect x="38.0" y="72.2" width="3.0" height="1.5" fill="#d4d4d4"/><rect x="42.0" y="72.2" width="4.0" height="1.5" fill="#9cdcfe"/><rect x="46.0" y="72.2" width="1.0" height="1.5" fill="#d4d4d4"/><rect x="48.0" y="72.2" width="3.0" height="1.5" fill="#d4d4d4"/><rect x="52.0" y="72.2" width="5.0" height="1.5" fill="#9cdcfe"/><rect x="57.0" y="72.2" width="1.0" height="1.5" fill="#d4d4d4"/><rect x="59.0" y="72.2" width="1.0" height="1.5" fill="#b5cea8"/><rect x="61.0" y="72.2" width="3.0" height="1.5" fill="#d4d4d4"/><rect x="2.0" y="74.2" width="5.0" height="1.5" fill="#569cd6"/><rect x="8.0" y="74.2" width="1.0" height="1.5" fill="#d4d4d4"/><rect x="9.0" y="74.2" width="5.0" height="1.5" fill="#9cdcfe"/><rect x="14.0" y="74.2" width="1.0" height="1.5" fill="#d4d4d4"/><rect x="16.0" y="74.2" width="8.0" height="1.5" fill="#9cdcfe"/><rect x="24.0" y="74.2" width="1.0" height="1.5" fill="#d4d4d4"/><rect x="26.0" y="74.2" width="1.0" height="1.5" fill="#d4d4d4"/><rect x="28.0" y="74.2" width="8.0" height="1.5" fill="#9cdcfe"/><rect x="36.0" y="74.2" width="1.0" height="1.5" fill="#d4d4d4"/><rect x="37.0" y="74.2" width="3.0" height="1.5" fill="#9cdcfe"/><rect x="40.0" y="74.2" width="4.0" height="1.5" fill="#d4d4d4"/><rect x="2.0" y="76.2" width="5.0" height="1.5" fill="#569cd6"/><rect x="8.0" y="76.2" width="1.0" height="1.5" fill="#d4d4d4"/><rect x="9.0" y="76.2" width="16.0" height="1.5" fill="#9cdcfe"/><rect x="25.0" y="76.2" width="1.0" height="1.5" fill="#d4d4d4"/><rect x="27.0" y="76.2" width="20.0" height="1.5" fill="#9cdcfe"/><rect x="47.0" y="76.2" width="1.0" height="1.5" fill="#d4d4d4"/><rect x="49.0" y="76.2" width="1.0" height="1.5" fill="#d4d4d4"/><rect x="51.0" y="76.2" width="8.0" height="1.5" fill="#9cdcfe"/><rect x="59.0" y="76.2" width="1.0" height="1.5" fill="#d4d4d4"/><rect x="60.0" y="76.2" width="16.0" height="1.5" fill="#4ec9b0"/><rect x="76.0" y="76.2" width="3.0" height="1.5" fill="#d4d4d4"/><rect x="4.0" y="78.2" width="4.0" height="1.5" fill="#9cdcfe"/><rect x="8.0" y="78.2" width="1.0" height="1.5" fill="#d4d4d4"/><rect x="10.0" y="78.2" width="1.0" height="1.5" fill="#b5cea8"/><rect x="11.0" y="78.2" width="1.0" height="1.5" fill="#d4d4d4"/><rect x="13.0" y="78.2" width="11.0" height="1.5" fill="#9cdcfe"/><rect x="24.0" y="78.2" width="1.0" height="1.5" fill="#d4d4d4"/><rect x="26.0" y="78.2" width="2.0" height="1.5" fill="#b5cea8"/><rect x="28.0" y="78.2" width="1.0" height="1.5" fill="#d4d4d4"/><rect x="30.0" y="78.2" width="7.0" height="1.5" fill="#9cdcfe"/><rect x="37.0" y="78.2" width="1.0" height="1.5" fill="#d4d4d4"/><rect x="39.0" y="78.2" width="6.0" height="1.5" fill="#ce9178"/><rect x="45.0" y="78.2" width="1.0" height="1.5" fill="#d4d4d4"/><rect x="47.0" y="78.2" width="5.0" height="1.5" fill="#9cdcfe"/><rect x="52.0" y="78.2" width="1.0" height="1.5" fill="#d4d4d4"/><rect x="54.0" y="78.2" width="5.0" height="1.5" fill="#ce9178"/><rect x="59.0" y="78.2" width="1.0" height="1.5" fill="#d4d4d4"/><rect x="61.0" y="78.2" width="7.0" height="1.5" fill="#9cdcfe"/><rect x="68.0" y="78.2" width="1.0" height="1.5" fill="#d4d4d4"/><rect x="70.0" y="78.2" width="2.0" height="1.5" fill="#ce9178"/><rect x="2.0" y="80.2" width="3.0" height="1.5" fill="#d4d4d4"/><rect x="2.0" y="82.2" width="5.0" height="1.5" fill="#569cd6"/><rect x="8.0" y="82.2" width="1.0" height="1.5" fill="#d4d4d4"/><rect x="9.0" y="82.2" width="6.0" height="1.5" fill="#9cdcfe"/><rect x="15.0" y="82.2" width="1.0" height="1.5" fill="#d4d4d4"/><rect x="17.0" y="82.2" width="9.0" height="1.5" fill="#9cdcfe"/><rect x="26.0" y="82.2" width="1.0" height="1.5" fill="#d4d4d4"/><rect x="28.0" y="82.2" width="1.0" height="1.5" fill="#d4d4d4"/><rect x="30.0" y="82.2" width="8.0" height="1.5" fill="#9cdcfe"/><rect x="38.0" y="82.2" width="1.0" height="1.5" fill="#d4d4d4"/><rect x="39.0" y="82.2" width="6.0" height="1.5" fill="#9cdcfe"/><rect x="45.0" y="82.2" width="6.0" height="1.5" fill="#d4d4d4"/><rect x="2.0" y="84.2" width="5.0" height="1.5" fill="#569cd6"/><rect x="8.0" y="84.2" width="1.0" height="1.5" fill="#d4d4d4"/><rect x="9.0" y="84.2" width="7.0" height="1.5" fill="#9cdcfe"/><rect x="16.0" y="84.2" width="1.0" height="1.5" fill="#d4d4d4"/><rect x="18.0" y="84.2" width="10.0" height="1.5" fill="#9cdcfe"/><rect x="28.0" y="84.2" width="1.0" height="1.5" fill="#d4d4d4"/><rect x="30.0" y="84.2" width="1.0" height="1.5" fill="#d4d4d4"/><rect x="32.0" y="84.2" width="8.0" height="1.5" fill="#9cdcfe"/><rect x="40.0" y="84.2" width="1.0" height="1.5" fill="#d4d4d4"/><rect x="41.0" y="84.2" width="7.0" height="1.5" fill="#9cdcfe"/><rect x="48.0" y="84.2" width="2.0" height="1.5" fill="#d4d4d4"/><rect x="50.0" y="84.2" width="5.0" height="1.5" fill="#569cd6"/><rect x="55.0" y="84.2" width="2.0" height="1.5" fill="#d4d4d4"/><rect x="2.0" y="88.2" width="9.0" height="1.5" fill="#dcdcaa"/><rect x="11.0" y="88.2" width="3.0" height="1.5" fill="#d4d4d4"/><rect x="15.0" y="88.2" width="2.0" height="1.5" fill="#d4d4d4"/><rect x="18.0" y="88.2" width="1.0" height="1.5" fill="#d4d4d4"/><rect x="4.0" y="90.2" width="5.0" height="1.5" fill="#569cd6"/><rect x="10.0" y="90.2" width="5.0" height="1.5" fill="#9cdcfe"/><rect x="16.0" y="90.2" width="1.0" height="1.5" fill="#d4d4d4"/><rect x="18.0" y="90.2" width="5.0" height="1.5" fill="#569cd6"/><rect x="24.0" y="90.2" width="2.0" height="1.5" fill="#d4d4d4"/><rect x="27.0" y="90.2" width="2.0" height="1.5" fill="#d4d4d4"/><rect x="30.0" y="90.2" width="1.0" height="1.5" fill="#d4d4d4"/><rect x="6.0" y="92.2" width="12.0" height="1.5" fill="#dcdcaa"/><rect x="18.0" y="92.2" width="1.0" height="1.5" fill="#d4d4d4"/><rect x="19.0" y="92.2" width="4.0" height="1.5" fill="#569cd6"/><rect x="23.0" y="92.2" width="2.0" height="1.5" fill="#d4d4d4"/><rect x="6.0" y="94.2" width="8.0" height="1.5" fill="#9cdcfe"/><rect x="14.0" y="94.2" width="1.0" height="1.5" fill="#d4d4d4"/><rect x="15.0" y="94.2" width="3.0" height="1.5" fill="#dcdcaa"/><rect x="18.0" y="94.2" width="1.0" height="1.5" fill="#d4d4d4"/><rect x="19.0" y="94.2" width="7.0" height="1.5" fill="#9cdcfe"/><rect x="26.0" y="94.2" width="1.0" height="1.5" fill="#d4d4d4"/><rect x="8.0" y="96.2" width="1.0" height="1.5" fill="#d4d4d4"/><rect x="9.0" y="96.2" width="7.0" height="1.5" fill="#dcdcaa"/><rect x="16.0" y="96.2" width="3.0" height="1.5" fill="#d4d4d4"/><rect x="20.0" y="96.2" width="2.0" height="1.5" fill="#d4d4d4"/><rect x="23.0" y="96.2" width="12.0" height="1.5" fill="#dcdcaa"/><rect x="35.0" y="96.2" width="1.0" height="1.5" fill="#d4d4d4"/><rect x="36.0" y="96.2" width="5.0" height="1.5" fill="#569cd6"/><rect x="41.0" y="96.2" width="3.0" height="1.5" fill="#d4d4d4"/><rect x="4.0" y="98.2" width="1.0" height="1.5" fill="#d4d4d4"/><rect x="4.0" y="100.2" width="5.0" height="1.5" fill="#dcdcaa"/><rect x="9.0" y="100.2" width="3.0" height="1.5" fill="#d4d4d4"/><rect x="2.0" y="102.2" width="2.0" height="1.5" fill="#d4d4d4"/><rect x="5.0" y="102.2" width="1.0" height="1.5" fill="#d4d4d4"/><rect x="6.0" y="102.2" width="7.0" height="1.5" fill="#9cdcfe"/><rect x="13.0" y="102.2" width="2.0" height="1.5" fill="#d4d4d4"/><rect x="2.0" y="106.2" width="9.0" height="1.5" fill="#dcdcaa"/><rect x="11.0" y="106.2" width="3.0" height="1.5" fill="#d4d4d4"/><rect x="15.0" y="106.2" width="2.0" height="1.5" fill="#d4d4d4"/><rect x="18.0" y="106.2" width="1.0" height="1.5" fill="#d4d4d4"/><rect x="4.0" y="108.2" width="5.0" height="1.5" fill="#569cd6"/><rect x="10.0" y="108.2" width="6.0" height="1.5" fill="#9cdcfe"/><rect x="17.0" y="108.2" width="1.0" height="1.5" fill="#d4d4d4"/><rect x="19.0" y="108.2" width="5.0" height="1.5" fill="#569cd6"/><rect x="25.0" y="108.2" width="2.0" height="1.5" fill="#d4d4d4"/><rect x="28.0" y="108.2" width="2.0" height="1.5" fill="#d4d4d4"/><rect x="31.0" y="108.2" width="1.0" height="1.5" fill="#d4d4d4"/><rect x="6.0" y="110.2" width="8.0" height="1.5" fill="#9cdcfe"/><rect x="8.0" y="112.2" width="1.0" height="1.5" fill="#d4d4d4"/><rect x="9.0" y="112.2" width="3.0" height="1.5" fill="#dcdcaa"/><rect x="12.0" y="112.2" width="1.0" height="1.5" fill="#d4d4d4"/><rect x="13.0" y="112.2" width="7.0" height="1.5" fill="#9cdcfe"/><rect x="20.0" y="112.2" width="1.0" height="1.5" fill="#d4d4d4"/><rect x="8.0" y="114.2" width="1.0" height="1.5" fill="#d4d4d4"/><rect x="9.0" y="114.2" width="4.0" height="1.5" fill="#dcdcaa"/><rect x="13.0" y="114.2" width="1.0" height="1.5" fill="#d4d4d4"/><rect x="14.0" y="114.2" width="8.0" height="1.5" fill="#9cdcfe"/><rect x="22.0" y="114.2" width="1.0" height="1.5" fill="#d4d4d4"/><rect x="8.0" y="116.2" width="1.0" height="1.5" fill="#d4d4d4"/><rect x="9.0" y="116.2" width="5.0" height="1.5" fill="#dcdcaa"/><rect x="14.0" y="116.2" width="1.0" height="1.5" fill="#d4d4d4"/><rect x="15.0" y="116.2" width="7.0" height="1.5" fill="#9cdcfe"/><rect x="22.0" y="116.2" width="1.0" height="1.5" fill="#d4d4d4"/><rect x="23.0" y="116.2" width="5.0" height="1.5" fill="#9cdcfe"/><rect x="28.0" y="116.2" width="1.0" height="1.5" fill="#d4d4d4"/><rect x="4.0" y="118.2" width="1.0" height="1.5" fill="#d4d4d4"/><rect x="4.0" y="120.2" width="1.0" height="1.5" fill="#dcdcaa"/><rect x="5.0" y="120.2" width="3.0" height="1.5" fill="#d4d4d4"/><rect x="2.0" y="122.2" width="2.0" height="1.5" fill="#d4d4d4"/><rect x="5.0" y="122.2" width="1.0" height="1.5" fill="#d4d4d4"/><rect x="6.0" y="122.2" width="7.0" height="1.5" fill="#9cdcfe"/><rect x="13.0" y="122.2" width="2.0" height="1.5" fill="#d4d4d4"/><rect x="2.0" y="126.2" width="9.0" height="1.5" fill="#dcdcaa"/><rect x="11.0" y="126.2" width="3.0" height="1.5" fill="#d4d4d4"/><rect x="15.0" y="126.2" width="2.0" height="1.5" fill="#d4d4d4"/><rect x="18.0" y="126.2" width="1.0" height="1.5" fill="#d4d4d4"/><rect x="4.0" y="128.2" width="5.0" height="1.5" fill="#569cd6"/><rect x="10.0" y="128.2" width="5.0" height="1.5" fill="#9cdcfe"/><rect x="16.0" y="128.2" width="1.0" height="1.5" fill="#d4d4d4"/><rect x="18.0" y="128.2" width="5.0" height="1.5" fill="#569cd6"/><rect x="24.0" y="128.2" width="2.0" height="1.5" fill="#d4d4d4"/><rect x="27.0" y="128.2" width="2.0" height="1.5" fill="#d4d4d4"/><rect x="30.0" y="128.2" width="1.0" height="1.5" fill="#d4d4d4"/><rect x="6.0" y="130.2" width="12.0" height="1.5" fill="#dcdcaa"/><rect x="18.0" y="130.2" width="1.0" height="1.5" fill="#d4d4d4"/><rect x="19.0" y="130.2" width="4.0" height="1.5" fill="#569cd6"/><rect x="23.0" y="130.2" width="2.0" height="1.5" fill="#d4d4d4"/><rect x="6.0" y="132.2" width="9.0" height="1.5" fill="#9cdcfe"/><rect x="15.0" y="132.2" width="1.0" height="1.5" fill="#d4d4d4"/><rect x="16.0" y="132.2" width="4.0" height="1.5" fill="#dcdcaa"/><rect x="20.0" y="132.2" width="1.0" height="1.5" fill="#d4d4d4"/><rect x="21.0" y="132.2" width="7.0" height="1.5" fill="#9cdcfe"/><rect x="28.0" y="132.2" width="1.0" height="1.5" fill="#d4d4d4"/><rect x="30.0" y="132.2" width="1.0" height="1.5" fill="#d4d4d4"/><rect x="8.0" y="134.2" width="5.0" height="1.5" fill="#9cdcfe"/><rect x="13.0" y="134.2" width="1.0" height="1.5" fill="#d4d4d4"/><rect x="15.0" y="134.2" width="16.0" height="1.5" fill="#9cdcfe"/><rect x="31.0" y="134.2" width="1.0" height="1.5" fill="#d4d4d4"/><rect x="32.0" y="134.2" width="7.0" height="1.5" fill="#9cdcfe"/><rect x="39.0" y="134.2" width="1.0" height="1.5" fill="#d4d4d4"/><rect x="8.0" y="136.2" width="8.0" height="1.5" fill="#9cdcfe"/><rect x="16.0" y="136.2" width="1.0" height="1.5" fill="#d4d4d4"/><rect x="18.0" y="136.2" width="16.0" height="1.5" fill="#9cdcfe"/><rect x="34.0" y="136.2" width="1.0" height="1.5" fill="#d4d4d4"/><rect x="35.0" y="136.2" width="5.0" height="1.5" fill="#9cdcfe"/><rect x="41.0" y="136.2" width="3.0" height="1.5" fill="#d4d4d4"/><rect x="45.0" y="136.2" width="5.0" height="1.5" fill="#ce9178"/><rect x="50.0" y="136.2" width="1.0" height="1.5" fill="#d4d4d4"/><rect x="8.0" y="138.2" width="6.0" height="1.5" fill="#9cdcfe"/><rect x="14.0" y="138.2" width="1.0" height="1.5" fill="#d4d4d4"/><rect x="16.0" y="138.2" width="16.0" height="1.5" fill="#9cdcfe"/><rect x="32.0" y="138.2" width="1.0" height="1.5" fill="#d4d4d4"/><rect x="33.0" y="138.2" width="7.0" height="1.5" fill="#9cdcfe"/><rect x="40.0" y="138.2" width="1.0" height="1.5" fill="#d4d4d4"/><rect x="8.0" y="140.2" width="4.0" height="1.5" fill="#c586c0"/><rect x="12.0" y="140.2" width="1.0" height="1.5" fill="#d4d4d4"/><rect x="14.0" y="140.2" width="16.0" height="1.5" fill="#9cdcfe"/><rect x="30.0" y="140.2" width="1.0" height="1.5" fill="#d4d4d4"/><rect x="31.0" y="140.2" width="4.0" height="1.5" fill="#9cdcfe"/><rect x="36.0" y="140.2" width="1.0" height="1.5" fill="#d4d4d4"/><rect x="38.0" y="140.2" width="16.0" height="1.5" fill="#9cdcfe"/><rect x="54.0" y="140.2" width="1.0" height="1.5" fill="#d4d4d4"/><rect x="55.0" y="140.2" width="11.0" height="1.5" fill="#9cdcfe"/><rect x="66.0" y="140.2" width="1.0" height="1.5" fill="#d4d4d4"/><rect x="8.0" y="142.2" width="6.0" height="1.5" fill="#9cdcfe"/><rect x="14.0" y="142.2" width="1.0" height="1.5" fill="#d4d4d4"/><rect x="16.0" y="142.2" width="16.0" height="1.5" fill="#9cdcfe"/><rect x="32.0" y="142.2" width="1.0" height="1.5" fill="#d4d4d4"/><rect x="33.0" y="142.2" width="11.0" height="1.5" fill="#9cdcfe"/><rect x="6.0" y="144.2" width="2.0" height="1.5" fill="#d4d4d4"/><rect x="8.0" y="146.2" width="1.0" height="1.5" fill="#d4d4d4"/><rect x="9.0" y="146.2" width="4.0" height="1.5" fill="#dcdcaa"/><rect x="13.0" y="146.2" width="1.0" height="1.5" fill="#d4d4d4"/><rect x="14.0" y="146.2" width="7.0" height="1.5" fill="#9cdcfe"/><rect x="21.0" y="146.2" width="1.0" height="1.5" fill="#d4d4d4"/><rect x="8.0" y="148.2" width="1.0" height="1.5" fill="#d4d4d4"/><rect x="9.0" y="148.2" width="5.0" height="1.5" fill="#dcdcaa"/><rect x="14.0" y="148.2" width="3.0" height="1.5" fill="#d4d4d4"/><rect x="18.0" y="148.2" width="2.0" height="1.5" fill="#d4d4d4"/><rect x="21.0" y="148.2" width="4.0" height="1.5" fill="#dcdcaa"/><rect x="25.0" y="148.2" width="2.0" height="1.5" fill="#d4d4d4"/><rect x="28.0" y="148.2" width="4.0" height="1.5" fill="#9cdcfe"/><rect x="32.0" y="148.2" width="1.0" height="1.5" fill="#d4d4d4"/><rect x="34.0" y="148.2" width="4.0" height="1.5" fill="#569cd6"/><rect x="38.0" y="148.2" width="1.0" height="1.5" fill="#d4d4d4"/><rect x="40.0" y="148.2" width="8.0" height="1.5" fill="#9cdcfe"/><rect x="48.0" y="148.2" width="1.0" height="1.5" fill="#d4d4d4"/><rect x="50.0" y="148.2" width="7.0" height="1.5" fill="#ce9178"/><rect x="57.0" y="148.2" width="1.0" height="1.5" fill="#d4d4d4"/><rect x="59.0" y="148.2" width="7.0" height="1.5" fill="#9cdcfe"/><rect x="66.0" y="148.2" width="1.0" height="1.5" fill="#d4d4d4"/><rect x="68.0" y="148.2" width="8.0" height="1.5" fill="#4ec9b0"/><rect x="76.0" y="148.2" width="1.0" height="1.5" fill="#d4d4d4"/><rect x="77.0" y="148.2" width="10.0" height="1.5" fill="#9cdcfe"/><rect x="88.0" y="148.2" width="3.0" height="1.5" fill="#d4d4d4"/><rect x="8.0" y="150.2" width="1.0" height="1.5" fill="#d4d4d4"/><rect x="9.0" y="150.2" width="7.0" height="1.5" fill="#dcdcaa"/><rect x="16.0" y="150.2" width="3.0" height="1.5" fill="#d4d4d4"/><rect x="20.0" y="150.2" width="2.0" height="1.5" fill="#d4d4d4"/><rect x="23.0" y="150.2" width="12.0" height="1.5" fill="#dcdcaa"/><rect x="35.0" y="150.2" width="1.0" height="1.5" fill="#d4d4d4"/><rect x="36.0" y="150.2" width="5.0" height="1.5" fill="#569cd6"/><rect x="41.0" y="150.2" width="3.0" height="1.5" fill="#d4d4d4"/><rect x="4.0" y="152.2" width="1.0" height="1.5" fill="#d4d4d4"/><rect x="4.0" y="154.2" width="5.0" height="1.5" fill="#dcdcaa"/><rect x="9.0" y="154.2" width="3.0" height="1.5" fill="#d4d4d4"/><rect x="2.0" y="156.2" width="2.0" height="1.5" fill="#d4d4d4"/><rect x="5.0" y="156.2" width="1.0" height="1.5" fill="#d4d4d4"/><rect x="6.0" y="156.2" width="16.0" height="1.5" fill="#9cdcfe"/><rect x="22.0" y="156.2" width="2.0" height="1.5" fill="#d4d4d4"/><rect x="2.0" y="160.2" width="5.0" height="1.5" fill="#569cd6"/><rect x="8.0" y="160.2" width="16.0" height="1.5" fill="#9cdcfe"/><rect x="25.0" y="160.2" width="1.0" height="1.5" fill="#d4d4d4"/><rect x="27.0" y="160.2" width="1.0" height="1.5" fill="#d4d4d4"/><rect x="28.0" y="160.2" width="5.0" height="1.5" fill="#9cdcfe"/><rect x="33.0" y="160.2" width="1.0" height="1.5" fill="#d4d4d4"/><rect x="35.0" y="160.2" width="3.0" height="1.5" fill="#9cdcfe"/><rect x="38.0" y="160.2" width="1.0" height="1.5" fill="#d4d4d4"/><rect x="40.0" y="160.2" width="7.0" height="1.5" fill="#9cdcfe"/><rect x="47.0" y="160.2" width="1.0" height="1.5" fill="#d4d4d4"/><rect x="49.0" y="160.2" width="6.0" height="1.5" fill="#9cdcfe"/><rect x="55.0" y="160.2" width="1.0" height="1.5" fill="#d4d4d4"/><rect x="57.0" y="160.2" width="2.0" height="1.5" fill="#d4d4d4"/><rect x="60.0" y="160.2" width="1.0" height="1.5" fill="#d4d4d4"/><rect x="4.0" y="162.2" width="3.0" height="1.5" fill="#569cd6"/><rect x="8.0" y="162.2" width="1.0" height="1.5" fill="#d4d4d4"/><rect x="10.0" y="162.2" width="4.0" height="1.5" fill="#9cdcfe"/><rect x="14.0" y="162.2" width="1.0" height="1.5" fill="#d4d4d4"/><rect x="16.0" y="162.2" width="3.0" height="1.5" fill="#d4d4d4"/><rect x="19.0" y="162.2" width="5.0" height="1.5" fill="#9cdcfe"/><rect x="25.0" y="162.2" width="1.0" height="1.5" fill="#d4d4d4"/><rect x="27.0" y="162.2" width="1.0" height="1.5" fill="#d4d4d4"/><rect x="29.0" y="162.2" width="16.0" height="1.5" fill="#9cdcfe"/><rect x="45.0" y="162.2" width="1.0" height="1.5" fill="#d4d4d4"/><rect x="4.0" y="164.2" width="4.0" height="1.5" fill="#9cdcfe"/><rect x="9.0" y="164.2" width="1.0" height="1.5" fill="#d4d4d4"/><rect x="11.0" y="164.2" width="7.0" height="1.5" fill="#9cdcfe"/><rect x="18.0" y="164.2" width="1.0" height="1.5" fill="#d4d4d4"/><rect x="4.0" y="166.2" width="20.0" height="1.5" fill="#dcdcaa"/><rect x="24.0" y="166.2" width="2.0" height="1.5" fill="#d4d4d4"/><rect x="27.0" y="166.2" width="3.0" height="1.5" fill="#d4d4d4"/><rect x="30.0" y="166.2" width="5.0" height="1.5" fill="#9cdcfe"/><rect x="35.0" y="166.2" width="1.0" height="1.5" fill="#d4d4d4"/><rect x="37.0" y="166.2" width="4.0" height="1.5" fill="#9cdcfe"/><rect x="42.0" y="166.2" width="3.0" height="1.5" fill="#d4d4d4"/><rect x="2.0" y="168.2" width="2.0" height="1.5" fill="#d4d4d4"/><rect x="2.0" y="172.2" width="5.0" height="1.5" fill="#569cd6"/><rect x="8.0" y="172.2" width="23.0" height="1.5" fill="#9cdcfe"/><rect x="32.0" y="172.2" width="1.0" height="1.5" fill="#d4d4d4"/><rect x="34.0" y="172.2" width="1.0" height="1.5" fill="#d4d4d4"/><rect x="35.0" y="172.2" width="5.0" height="1.5" fill="#9cdcfe"/><rect x="40.0" y="172.2" width="1.0" height="1.5" fill="#d4d4d4"/><rect x="42.0" y="172.2" width="3.0" height="1.5" fill="#9cdcfe"/><rect x="45.0" y="172.2" width="1.0" height="1.5" fill="#d4d4d4"/><rect x="47.0" y="172.2" width="2.0" height="1.5" fill="#d4d4d4"/><rect x="50.0" y="172.2" width="1.0" height="1.5" fill="#d4d4d4"/><rect x="4.0" y="174.2" width="3.0" height="1.5" fill="#569cd6"/><rect x="8.0" y="174.2" width="1.0" height="1.5" fill="#d4d4d4"/><rect x="10.0" y="174.2" width="4.0" height="1.5" fill="#9cdcfe"/><rect x="14.0" y="174.2" width="1.0" height="1.5" fill="#d4d4d4"/><rect x="16.0" y="174.2" width="11.0" height="1.5" fill="#9cdcfe"/><rect x="27.0" y="174.2" width="1.0" height="1.5" fill="#d4d4d4"/><rect x="29.0" y="174.2" width="3.0" height="1.5" fill="#d4d4d4"/><rect x="32.0" y="174.2" width="5.0" height="1.5" fill="#9cdcfe"/><rect x="38.0" y="174.2" width="1.0" height="1.5" fill="#d4d4d4"/><rect x="40.0" y="174.2" width="1.0" height="1.5" fill="#d4d4d4"/><rect x="42.0" y="174.2" width="16.0" height="1.5" fill="#9cdcfe"/><rect x="58.0" y="174.2" width="1.0" height="1.5" fill="#d4d4d4"/><rect x="4.0" y="176.2" width="4.0" height="1.5" fill="#9cdcfe"/><rect x="9.0" y="176.2" width="1.0" height="1.5" fill="#d4d4d4"/><rect x="11.0" y="176.2" width="1.0" height="1.5" fill="#b5cea8"/><rect x="12.0" y="176.2" width="1.0" height="1.5" fill="#d4d4d4"/><rect x="4.0" y="178.2" width="11.0" height="1.5" fill="#9cdcfe"/><rect x="16.0" y="178.2" width="1.0" height="1.5" fill="#d4d4d4"/><rect x="18.0" y="178.2" width="1.0" height="1.5" fill="#d4d4d4"/><rect x="19.0" y="178.2" width="5.0" height="1.5" fill="#9cdcfe"/><rect x="24.0" y="178.2" width="1.0" height="1.5" fill="#d4d4d4"/><rect x="25.0" y="178.2" width="6.0" height="1.5" fill="#9cdcfe"/><rect x="31.0" y="178.2" width="1.0" height="1.5" fill="#d4d4d4"/><rect x="32.0" y="178.2" width="5.0" height="1.5" fill="#9cdcfe"/><rect x="37.0" y="178.2" width="1.0" height="1.5" fill="#d4d4d4"/><rect x="4.0" y="180.2" width="20.0" height="1.5" fill="#dcdcaa"/><rect x="24.0" y="180.2" width="2.0" height="1.5" fill="#d4d4d4"/><rect x="27.0" y="180.2" width="3.0" height="1.5" fill="#d4d4d4"/><rect x="30.0" y="180.2" width="5.0" height="1.5" fill="#9cdcfe"/><rect x="35.0" y="180.2" width="1.0" height="1.5" fill="#d4d4d4"/><rect x="37.0" y="180.2" width="4.0" height="1.5" fill="#9cdcfe"/><rect x="41.0" y="180.2" width="1.0" height="1.5" fill="#d4d4d4"/><rect x="43.0" y="180.2" width="11.0" height="1.5" fill="#9cdcfe"/><rect x="55.0" y="180.2" width="3.0" height="1.5" fill="#d4d4d4"/><rect x="2.0" y="182.2" width="2.0" height="1.5" fill="#d4d4d4"/><rect x="2.0" y="186.2" width="6.0" height="1.5" fill="#c586c0"/><rect x="9.0" y="186.2" width="1.0" height="1.5" fill="#d4d4d4"/><rect x="4.0" y="188.2" width="2.0" height="1.5" fill="#d4d4d4"/><rect x="6.0" y="190.2" width="1.0" height="1.5" fill="#d4d4d4"/><rect x="7.0" y="190.2" width="9.0" height="1.5" fill="#4ec9b0"/><rect x="17.0" y="190.2" width="5.0" height="1.5" fill="#9cdcfe"/><rect x="22.0" y="190.2" width="2.0" height="1.5" fill="#d4d4d4"/><rect x="24.0" y="190.2" width="1.0" height="1.5" fill="#dcdcaa"/><rect x="25.0" y="190.2" width="2.0" height="1.5" fill="#d4d4d4"/><rect x="27.0" y="190.2" width="11.0" height="1.5" fill="#9cdcfe"/><rect x="38.0" y="190.2" width="3.0" height="1.5" fill="#ce9178"/><rect x="42.0" y="190.2" width="8.0" height="1.5" fill="#9cdcfe"/><rect x="50.0" y="190.2" width="2.0" height="1.5" fill="#d4d4d4"/><rect x="52.0" y="190.2" width="5.0" height="1.5" fill="#9cdcfe"/><rect x="57.0" y="190.2" width="2.0" height="1.5" fill="#d4d4d4"/><rect x="59.0" y="190.2" width="4.0" height="1.5" fill="#9cdcfe"/><rect x="63.0" y="190.2" width="1.0" height="1.5" fill="#d4d4d4"/><rect x="65.0" y="190.2" width="6.0" height="1.5" fill="#9cdcfe"/><rect x="71.0" y="190.2" width="4.0" height="1.5" fill="#d4d4d4"/><rect x="76.0" y="190.2" width="2.0" height="1.5" fill="#d4d4d4"/><rect x="79.0" y="190.2" width="8.0" height="1.5" fill="#dcdcaa"/><rect x="87.0" y="190.2" width="2.0" height="1.5" fill="#d4d4d4"/><rect x="89.0" y="190.2" width="1.0" height="1.5" fill="#b5cea8"/><rect x="90.0" y="190.2" width="2.0" height="1.5" fill="#d4d4d4"/><rect x="93.0" y="190.2" width="2.0" height="1.5" fill="#d4d4d4"/><rect x="6.0" y="192.2" width="1.0" height="1.5" fill="#d4d4d4"/><rect x="7.0" y="192.2" width="3.0" height="1.5" fill="#4ec9b0"/><rect x="11.0" y="192.2" width="2.0" height="1.5" fill="#9cdcfe"/><rect x="13.0" y="192.2" width="3.0" height="1.5" fill="#d4d4d4"/><rect x="17.0" y="192.2" width="7.0" height="1.5" fill="#9cdcfe"/><rect x="24.0" y="192.2" width="1.0" height="1.5" fill="#d4d4d4"/><rect x="26.0" y="192.2" width="6.0" height="1.5" fill="#ce9178"/><rect x="32.0" y="192.2" width="1.0" height="1.5" fill="#d4d4d4"/><rect x="34.0" y="192.2" width="14.0" height="1.5" fill="#9cdcfe"/><rect x="48.0" y="192.2" width="1.0" height="1.5" fill="#d4d4d4"/><rect x="50.0" y="192.2" width="15.0" height="1.5" fill="#ce9178"/><rect x="65.0" y="192.2" width="1.0" height="1.5" fill="#d4d4d4"/><rect x="67.0" y="192.2" width="2.0" height="1.5" fill="#9cdcfe"/><rect x="69.0" y="192.2" width="1.0" height="1.5" fill="#d4d4d4"/><rect x="71.0" y="192.2" width="1.0" height="1.5" fill="#b5cea8"/><rect x="73.0" y="192.2" width="3.0" height="1.5" fill="#d4d4d4"/><rect x="8.0" y="194.2" width="1.0" height="1.5" fill="#d4d4d4"/><rect x="9.0" y="194.2" width="9.0" height="1.5" fill="#4ec9b0"/><rect x="19.0" y="194.2" width="4.0" height="1.5" fill="#9cdcfe"/><rect x="23.0" y="194.2" width="2.0" height="1.5" fill="#d4d4d4"/><rect x="25.0" y="194.2" width="5.0" height="1.5" fill="#9cdcfe"/><rect x="30.0" y="194.2" width="1.0" height="1.5" fill="#ce9178"/><rect x="32.0" y="194.2" width="5.0" height="1.5" fill="#9cdcfe"/><rect x="37.0" y="194.2" width="2.0" height="1.5" fill="#d4d4d4"/><rect x="39.0" y="194.2" width="6.0" height="1.5" fill="#9cdcfe"/><rect x="45.0" y="194.2" width="1.0" height="1.5" fill="#d4d4d4"/><rect x="47.0" y="194.2" width="8.0" height="1.5" fill="#9cdcfe"/><rect x="55.0" y="194.2" width="3.0" height="1.5" fill="#d4d4d4"/><rect x="58.0" y="194.2" width="1.0" height="1.5" fill="#9cdcfe"/><rect x="59.0" y="194.2" width="1.0" height="1.5" fill="#d4d4d4"/><rect x="61.0" y="194.2" width="2.0" height="1.5" fill="#d4d4d4"/><rect x="64.0" y="194.2" width="9.0" height="1.5" fill="#dcdcaa"/><rect x="73.0" y="194.2" width="1.0" height="1.5" fill="#d4d4d4"/><rect x="74.0" y="194.2" width="1.0" height="1.5" fill="#9cdcfe"/><rect x="75.0" y="194.2" width="1.0" height="1.5" fill="#d4d4d4"/><rect x="76.0" y="194.2" width="6.0" height="1.5" fill="#9cdcfe"/><rect x="82.0" y="194.2" width="1.0" height="1.5" fill="#d4d4d4"/><rect x="83.0" y="194.2" width="5.0" height="1.5" fill="#9cdcfe"/><rect x="88.0" y="194.2" width="2.0" height="1.5" fill="#d4d4d4"/><rect x="91.0" y="194.2" width="11.0" height="1.5" fill="#9cdcfe"/><rect x="102.0" y="194.2" width="2.0" height="1.5" fill="#d4d4d4"/><rect x="104.0" y="194.2" width="1.0" height="1.5" fill="#dcdcaa"/><rect x="105.0" y="194.2" width="2.0" height="1.5" fill="#d4d4d4"/><rect x="107.0" y="194.2" width="5.0" height="1.5" fill="#9cdcfe"/><rect x="8.0" y="196.2" width="1.0" height="1.5" fill="#d4d4d4"/><rect x="9.0" y="196.2" width="6.0" height="1.5" fill="#4ec9b0"/><rect x="16.0" y="196.2" width="7.0" height="1.5" fill="#9cdcfe"/><rect x="23.0" y="196.2" width="2.0" height="1.5" fill="#d4d4d4"/><rect x="25.0" y="196.2" width="9.0" height="1.5" fill="#9cdcfe"/><rect x="34.0" y="196.2" width="1.0" height="1.5" fill="#ce9178"/><rect x="36.0" y="196.2" width="9.0" height="1.5" fill="#9cdcfe"/><rect x="45.0" y="196.2" width="3.0" height="1.5" fill="#d4d4d4"/><rect x="48.0" y="196.2" width="12.0" height="1.5" fill="#4ec9b0"/><rect x="61.0" y="196.2" width="3.0" height="1.5" fill="#d4d4d4"/><rect x="65.0" y="196.2" width="7.0" height="1.5" fill="#9cdcfe"/><rect x="72.0" y="196.2" width="4.0" height="1.5" fill="#d4d4d4"/><rect x="77.0" y="196.2" width="2.0" height="1.5" fill="#d4d4d4"/><rect x="80.0" y="196.2" width="10.0" height="1.5" fill="#dcdcaa"/><rect x="90.0" y="196.2" width="1.0" height="1.5" fill="#d4d4d4"/><rect x="91.0" y="196.2" width="4.0" height="1.5" fill="#569cd6"/><rect x="95.0" y="196.2" width="3.0" height="1.5" fill="#d4d4d4"/><rect x="6.0" y="198.2" width="2.0" height="1.5" fill="#d4d4d4"/><rect x="8.0" y="198.2" width="3.0" height="1.5" fill="#4ec9b0"/><rect x="11.0" y="198.2" width="1.0" height="1.5" fill="#d4d4d4"/><rect x="6.0" y="200.2" width="1.0" height="1.5" fill="#d4d4d4"/><rect x="7.0" y="200.2" width="14.0" height="1.5" fill="#4ec9b0"/><rect x="22.0" y="200.2" width="4.0" height="1.5" fill="#9cdcfe"/><rect x="26.0" y="200.2" width="2.0" height="1.5" fill="#d4d4d4"/><rect x="28.0" y="200.2" width="9.0" height="1.5" fill="#9cdcfe"/><rect x="37.0" y="200.2" width="1.0" height="1.5" fill="#d4d4d4"/><rect x="39.0" y="200.2" width="2.0" height="1.5" fill="#d4d4d4"/><rect x="6.0" y="202.2" width="1.0" height="1.5" fill="#d4d4d4"/><rect x="7.0" y="202.2" width="5.0" height="1.5" fill="#4ec9b0"/><rect x="13.0" y="202.2" width="2.0" height="1.5" fill="#9cdcfe"/><rect x="15.0" y="202.2" width="3.0" height="1.5" fill="#d4d4d4"/><rect x="19.0" y="202.2" width="5.0" height="1.5" fill="#9cdcfe"/><rect x="24.0" y="202.2" width="1.0" height="1.5" fill="#d4d4d4"/><rect x="26.0" y="202.2" width="6.0" height="1.5" fill="#ce9178"/><rect x="32.0" y="202.2" width="1.0" height="1.5" fill="#d4d4d4"/><rect x="34.0" y="202.2" width="8.0" height="1.5" fill="#9cdcfe"/><rect x="42.0" y="202.2" width="1.0" height="1.5" fill="#d4d4d4"/><rect x="44.0" y="202.2" width="8.0" height="1.5" fill="#ce9178"/><rect x="53.0" y="202.2" width="3.0" height="1.5" fill="#d4d4d4"/><rect x="8.0" y="204.2" width="1.0" height="1.5" fill="#d4d4d4"/><rect x="9.0" y="204.2" width="14.0" height="1.5" fill="#4ec9b0"/><rect x="23.0" y="204.2" width="1.0" height="1.5" fill="#d4d4d4"/><rect x="10.0" y="206.2" width="1.0" height="1.5" fill="#d4d4d4"/><rect x="11.0" y="206.2" width="5.0" height="1.5" fill="#4ec9b0"/><rect x="17.0" y="206.2" width="12.0" height="1.5" fill="#9cdcfe"/><rect x="29.0" y="206.2" width="1.0" height="1.5" fill="#d4d4d4"/><rect x="12.0" y="208.2" width="1.0" height="1.5" fill="#d4d4d4"/><rect x="13.0" y="208.2" width="17.0" height="1.5" fill="#4ec9b0"/><rect x="31.0" y="208.2" width="9.0" height="1.5" fill="#9cdcfe"/><rect x="40.0" y="208.2" width="2.0" height="1.5" fill="#d4d4d4"/><rect x="42.0" y="208.2" width="9.0" height="1.5" fill="#9cdcfe"/><rect x="51.0" y="208.2" width="1.0" height="1.5" fill="#d4d4d4"/><rect x="53.0" y="208.2" width="5.0" height="1.5" fill="#9cdcfe"/><rect x="58.0" y="208.2" width="2.0" height="1.5" fill="#d4d4d4"/><rect x="60.0" y="208.2" width="16.0" height="1.5" fill="#9cdcfe"/><rect x="76.0" y="208.2" width="1.0" height="1.5" fill="#d4d4d4"/><rect x="77.0" y="208.2" width="5.0" height="1.5" fill="#9cdcfe"/><rect x="82.0" y="208.2" width="1.0" height="1.5" fill="#d4d4d4"/><rect x="84.0" y="208.2" width="7.0" height="1.5" fill="#9cdcfe"/><rect x="91.0" y="208.2" width="2.0" height="1.5" fill="#d4d4d4"/><rect x="93.0" y="208.2" width="16.0" height="1.5" fill="#9cdcfe"/><rect x="109.0" y="208.2" width="1.0" height="1.5" fill="#d4d4d4"/><rect x="110.0" y="208.2" width="2.0" height="1.5" fill="#9cdcfe"/><rect x="12.0" y="210.2" width="1.0" height="1.5" fill="#d4d4d4"/><rect x="13.0" y="210.2" width="9.0" height="1.5" fill="#4ec9b0"/><rect x="22.0" y="210.2" width="1.0" height="1.5" fill="#d4d4d4"/><rect x="14.0" y="212.2" width="1.0" height="1.5" fill="#d4d4d4"/><rect x="15.0" y="212.2" width="4.0" height="1.5" fill="#9cdcfe"/><rect x="19.0" y="212.2" width="1.0" height="1.5" fill="#d4d4d4"/><rect x="20.0" y="212.2" width="4.0" height="1.5" fill="#9cdcfe"/><rect x="24.0" y="212.2" width="1.0" height="1.5" fill="#d4d4d4"/><rect x="25.0" y="212.2" width="3.0" height="1.5" fill="#dcdcaa"/><rect x="28.0" y="212.2" width="2.0" height="1.5" fill="#d4d4d4"/><rect x="30.0" y="212.2" width="3.0" height="1.5" fill="#9cdcfe"/><rect x="33.0" y="212.2" width="1.0" height="1.5" fill="#d4d4d4"/><rect x="35.0" y="212.2" width="6.0" height="1.5" fill="#4ec9b0"/><rect x="41.0" y="212.2" width="1.0" height="1.5" fill="#d4d4d4"/><rect x="43.0" y="212.2" width="2.0" height="1.5" fill="#d4d4d4"/><rect x="46.0" y="212.2" width="1.0" height="1.5" fill="#d4d4d4"/><rect x="16.0" y="214.2" width="1.0" height="1.5" fill="#d4d4d4"/><rect x="17.0" y="214.2" width="14.0" height="1.5" fill="#4ec9b0"/><rect x="32.0" y="214.2" width="3.0" height="1.5" fill="#9cdcfe"/><rect x="35.0" y="214.2" width="2.0" height="1.5" fill="#d4d4d4"/><rect x="37.0" y="214.2" width="3.0" height="1.5" fill="#9cdcfe"/><rect x="40.0" y="214.2" width="1.0" height="1.5" fill="#d4d4d4"/><rect x="41.0" y="214.2" width="2.0" height="1.5" fill="#9cdcfe"/><rect x="43.0" y="214.2" width="2.0" height="1.5" fill="#d4d4d4"/><rect x="18.0" y="216.2" width="1.0" height="1.5" fill="#d4d4d4"/><rect x="19.0" y="216.2" width="15.0" height="1.5" fill="#4ec9b0"/><rect x="34.0" y="216.2" width="1.0" height="1.5" fill="#d4d4d4"/><rect x="20.0" y="218.2" width="1.0" height="1.5" fill="#d4d4d4"/><rect x="21.0" y="218.2" width="3.0" height="1.5" fill="#4ec9b0"/><rect x="25.0" y="218.2" width="2.0" height="1.5" fill="#9cdcfe"/><rect x="27.0" y="218.2" width="3.0" height="1.5" fill="#d4d4d4"/><rect x="31.0" y="218.2" width="7.0" height="1.5" fill="#9cdcfe"/><rect x="38.0" y="218.2" width="1.0" height="1.5" fill="#d4d4d4"/><rect x="40.0" y="218.2" width="6.0" height="1.5" fill="#ce9178"/><rect x="47.0" y="218.2" width="3.0" height="1.5" fill="#d4d4d4"/><rect x="22.0" y="220.2" width="1.0" height="1.5" fill="#d4d4d4"/><rect x="23.0" y="220.2" width="10.0" height="1.5" fill="#4ec9b0"/><rect x="33.0" y="220.2" width="2.0" height="1.5" fill="#d4d4d4"/><rect x="35.0" y="220.2" width="3.0" height="1.5" fill="#9cdcfe"/><rect x="38.0" y="220.2" width="1.0" height="1.5" fill="#d4d4d4"/><rect x="39.0" y="220.2" width="4.0" height="1.5" fill="#9cdcfe"/><rect x="43.0" y="220.2" width="3.0" height="1.5" fill="#d4d4d4"/><rect x="46.0" y="220.2" width="10.0" height="1.5" fill="#4ec9b0"/><rect x="56.0" y="220.2" width="1.0" height="1.5" fill="#d4d4d4"/><rect x="20.0" y="222.2" width="2.0" height="1.5" fill="#d4d4d4"/><rect x="22.0" y="222.2" width="3.0" height="1.5" fill="#4ec9b0"/><rect x="25.0" y="222.2" width="1.0" height="1.5" fill="#d4d4d4"/><rect x="18.0" y="224.2" width="2.0" height="1.5" fill="#d4d4d4"/><rect x="20.0" y="224.2" width="15.0" height="1.5" fill="#4ec9b0"/><rect x="35.0" y="224.2" width="1.0" height="1.5" fill="#d4d4d4"/><rect x="18.0" y="226.2" width="1.0" height="1.5" fill="#d4d4d4"/><rect x="19.0" y="226.2" width="15.0" height="1.5" fill="#4ec9b0"/><rect x="34.0" y="226.2" width="1.0" height="1.5" fill="#d4d4d4"/><rect x="20.0" y="228.2" width="1.0" height="1.5" fill="#d4d4d4"/><rect x="21.0" y="228.2" width="7.0" height="1.5" fill="#4ec9b0"/><rect x="29.0" y="228.2" width="5.0" height="1.5" fill="#9cdcfe"/><rect x="34.0" y="228.2" width="2.0" height="1.5" fill="#d4d4d4"/><rect x="36.0" y="228.2" width="3.0" height="1.5" fill="#9cdcfe"/><rect x="39.0" y="228.2" width="1.0" height="1.5" fill="#d4d4d4"/><rect x="40.0" y="228.2" width="3.0" height="1.5" fill="#9cdcfe"/><rect x="43.0" y="228.2" width="2.0" height="1.5" fill="#d4d4d4"/><rect x="22.0" y="230.2" width="1.0" height="1.5" fill="#d4d4d4"/><rect x="23.0" y="230.2" width="4.0" height="1.5" fill="#9cdcfe"/><rect x="27.0" y="230.2" width="2.0" height="1.5" fill="#d4d4d4"/><rect x="29.0" y="230.2" width="3.0" height="1.5" fill="#9cdcfe"/><rect x="32.0" y="230.2" width="1.0" height="1.5" fill="#d4d4d4"/><rect x="33.0" y="230.2" width="3.0" height="1.5" fill="#9cdcfe"/><rect x="36.0" y="230.2" width="3.0" height="1.5" fill="#d4d4d4"/><rect x="39.0" y="230.2" width="4.0" height="1.5" fill="#9cdcfe"/><rect x="43.0" y="230.2" width="1.0" height="1.5" fill="#d4d4d4"/><rect x="20.0" y="232.2" width="2.0" height="1.5" fill="#d4d4d4"/><rect x="22.0" y="232.2" width="7.0" height="1.5" fill="#4ec9b0"/><rect x="29.0" y="232.2" width="1.0" height="1.5" fill="#d4d4d4"/><rect x="18.0" y="234.2" width="2.0" height="1.5" fill="#d4d4d4"/><rect x="20.0" y="234.2" width="15.0" height="1.5" fill="#4ec9b0"/><rect x="35.0" y="234.2" width="1.0" height="1.5" fill="#d4d4d4"/><rect x="18.0" y="236.2" width="1.0" height="1.5" fill="#d4d4d4"/><rect x="19.0" y="236.2" width="15.0" height="1.5" fill="#4ec9b0"/><rect x="34.0" y="236.2" width="1.0" height="1.5" fill="#d4d4d4"/><rect x="20.0" y="238.2" width="1.0" height="1.5" fill="#d4d4d4"/><rect x="21.0" y="238.2" width="3.0" height="1.5" fill="#9cdcfe"/><rect x="24.0" y="238.2" width="1.0" height="1.5" fill="#d4d4d4"/><rect x="25.0" y="238.2" width="4.0" height="1.5" fill="#9cdcfe"/><rect x="30.0" y="238.2" width="3.0" height="1.5" fill="#d4d4d4"/><rect x="34.0" y="238.2" width="1.0" height="1.5" fill="#b5cea8"/><rect x="36.0" y="238.2" width="1.0" height="1.5" fill="#d4d4d4"/><rect x="38.0" y="238.2" width="1.0" height="1.5" fill="#d4d4d4"/><rect x="22.0" y="240.2" width="1.0" height="1.5" fill="#d4d4d4"/><rect x="23.0" y="240.2" width="4.0" height="1.5" fill="#4ec9b0"/><rect x="28.0" y="240.2" width="5.0" height="1.5" fill="#9cdcfe"/><rect x="33.0" y="240.2" width="2.0" height="1.5" fill="#d4d4d4"/><rect x="35.0" y="240.2" width="1.0" height="1.5" fill="#dcdcaa"/><rect x="36.0" y="240.2" width="2.0" height="1.5" fill="#d4d4d4"/><rect x="38.0" y="240.2" width="7.0" height="1.5" fill="#9cdcfe"/><rect x="45.0" y="240.2" width="3.0" height="1.5" fill="#ce9178"/><rect x="49.0" y="240.2" width="5.0" height="1.5" fill="#9cdcfe"/><rect x="54.0" y="240.2" width="2.0" height="1.5" fill="#d4d4d4"/><rect x="56.0" y="240.2" width="7.0" height="1.5" fill="#9cdcfe"/><rect x="63.0" y="240.2" width="8.0" height="1.5" fill="#ce9178"/><rect x="71.0" y="240.2" width="5.0" height="1.5" fill="#9cdcfe"/><rect x="76.0" y="240.2" width="11.0" height="1.5" fill="#ce9178"/><rect x="87.0" y="240.2" width="8.0" height="1.5" fill="#9cdcfe"/><rect x="95.0" y="240.2" width="1.0" height="1.5" fill="#ce9178"/><rect x="97.0" y="240.2" width="2.0" height="1.5" fill="#d4d4d4"/><rect x="20.0" y="242.2" width="1.0" height="1.5" fill="#d4d4d4"/><rect x="22.0" y="242.2" width="1.0" height="1.5" fill="#d4d4d4"/><rect x="24.0" y="242.2" width="1.0" height="1.5" fill="#d4d4d4"/><rect x="22.0" y="244.2" width="1.0" height="1.5" fill="#d4d4d4"/><rect x="23.0" y="244.2" width="4.0" height="1.5" fill="#4ec9b0"/><rect x="28.0" y="244.2" width="5.0" height="1.5" fill="#9cdcfe"/><rect x="33.0" y="244.2" width="2.0" height="1.5" fill="#d4d4d4"/><rect x="35.0" y="244.2" width="1.0" height="1.5" fill="#dcdcaa"/><rect x="36.0" y="244.2" width="2.0" height="1.5" fill="#d4d4d4"/><rect x="38.0" y="244.2" width="8.0" height="1.5" fill="#9cdcfe"/><rect x="46.0" y="244.2" width="3.0" height="1.5" fill="#ce9178"/><rect x="50.0" y="244.2" width="5.0" height="1.5" fill="#9cdcfe"/><rect x="55.0" y="244.2" width="2.0" height="1.5" fill="#d4d4d4"/><rect x="57.0" y="244.2" width="9.0" height="1.5" fill="#9cdcfe"/><rect x="66.0" y="244.2" width="1.0" height="1.5" fill="#ce9178"/><rect x="68.0" y="244.2" width="2.0" height="1.5" fill="#d4d4d4"/><rect x="20.0" y="246.2" width="2.0" height="1.5" fill="#d4d4d4"/><rect x="18.0" y="248.2" width="2.0" height="1.5" fill="#d4d4d4"/><rect x="20.0" y="248.2" width="15.0" height="1.5" fill="#4ec9b0"/><rect x="35.0" y="248.2" width="1.0" height="1.5" fill="#d4d4d4"/><rect x="18.0" y="250.2" width="1.0" height="1.5" fill="#d4d4d4"/><rect x="19.0" y="250.2" width="15.0" height="1.5" fill="#4ec9b0"/><rect x="34.0" y="250.2" width="1.0" height="1.5" fill="#d4d4d4"/><rect x="20.0" y="252.2" width="1.0" height="1.5" fill="#d4d4d4"/><rect x="21.0" y="252.2" width="4.0" height="1.5" fill="#4ec9b0"/><rect x="26.0" y="252.2" width="9.0" height="1.5" fill="#9cdcfe"/><rect x="36.0" y="252.2" width="7.0" height="1.5" fill="#9cdcfe"/><rect x="43.0" y="252.2" width="2.0" height="1.5" fill="#d4d4d4"/><rect x="45.0" y="252.2" width="1.0" height="1.5" fill="#b5cea8"/><rect x="46.0" y="252.2" width="2.0" height="1.5" fill="#d4d4d4"/><rect x="22.0" y="254.2" width="1.0" height="1.5" fill="#d4d4d4"/><rect x="23.0" y="254.2" width="4.0" height="1.5" fill="#4ec9b0"/><rect x="28.0" y="254.2" width="4.0" height="1.5" fill="#9cdcfe"/><rect x="32.0" y="254.2" width="1.0" height="1.5" fill="#d4d4d4"/><rect x="24.0" y="256.2" width="1.0" height="1.5" fill="#d4d4d4"/><rect x="25.0" y="256.2" width="10.0" height="1.5" fill="#4ec9b0"/><rect x="36.0" y="256.2" width="4.0" height="1.5" fill="#9cdcfe"/><rect x="40.0" y="256.2" width="2.0" height="1.5" fill="#d4d4d4"/><rect x="42.0" y="256.2" width="5.0" height="1.5" fill="#9cdcfe"/><rect x="47.0" y="256.2" width="1.0" height="1.5" fill="#ce9178"/><rect x="49.0" y="256.2" width="7.0" height="1.5" fill="#9cdcfe"/><rect x="56.0" y="256.2" width="4.0" height="1.5" fill="#d4d4d4"/><rect x="61.0" y="256.2" width="2.0" height="1.5" fill="#d4d4d4"/><rect x="64.0" y="256.2" width="8.0" height="1.5" fill="#dcdcaa"/><rect x="72.0" y="256.2" width="3.0" height="1.5" fill="#d4d4d4"/><rect x="75.0" y="256.2" width="6.0" height="1.5" fill="#9cdcfe"/><rect x="81.0" y="256.2" width="1.0" height="1.5" fill="#d4d4d4"/><rect x="82.0" y="256.2" width="1.0" height="1.5" fill="#9cdcfe"/><rect x="83.0" y="256.2" width="1.0" height="1.5" fill="#d4d4d4"/><rect x="84.0" y="256.2" width="3.0" height="1.5" fill="#9cdcfe"/><rect x="87.0" y="256.2" width="1.0" height="1.5" fill="#d4d4d4"/><rect x="88.0" y="256.2" width="2.0" height="1.5" fill="#9cdcfe"/><rect x="90.0" y="256.2" width="5.0" height="1.5" fill="#d4d4d4"/><rect x="26.0" y="258.2" width="1.0" height="1.5" fill="#d4d4d4"/><rect x="27.0" y="258.2" width="10.0" height="1.5" fill="#4ec9b0"/><rect x="38.0" y="258.2" width="2.0" height="1.5" fill="#d4d4d4"/><rect x="26.0" y="260.2" width="1.0" height="1.5" fill="#d4d4d4"/><rect x="27.0" y="260.2" width="5.0" height="1.5" fill="#4ec9b0"/><rect x="33.0" y="260.2" width="5.0" height="1.5" fill="#9cdcfe"/><rect x="38.0" y="260.2" width="2.0" height="1.5" fill="#d4d4d4"/><rect x="40.0" y="260.2" width="9.0" height="1.5" fill="#9cdcfe"/><rect x="49.0" y="260.2" width="11.0" height="1.5" fill="#ce9178"/><rect x="60.0" y="260.2" width="3.0" height="1.5" fill="#9cdcfe"/><rect x="63.0" y="260.2" width="2.0" height="1.5" fill="#ce9178"/><rect x="28.0" y="262.2" width="1.0" height="1.5" fill="#d4d4d4"/><rect x="29.0" y="262.2" width="5.0" height="1.5" fill="#4ec9b0"/><rect x="35.0" y="262.2" width="9.0" height="1.5" fill="#9cdcfe"/><rect x="44.0" y="262.2" width="2.0" height="1.5" fill="#d4d4d4"/><rect x="46.0" y="262.2" width="3.0" height="1.5" fill="#9cdcfe"/><rect x="49.0" y="262.2" width="1.0" height="1.5" fill="#ce9178"/><rect x="51.0" y="262.2" width="7.0" height="1.5" fill="#9cdcfe"/><rect x="58.0" y="262.2" width="2.0" height="1.5" fill="#d4d4d4"/><rect x="60.0" y="262.2" width="1.0" height="1.5" fill="#b5cea8"/><rect x="61.0" y="262.2" width="2.0" height="1.5" fill="#d4d4d4"/><rect x="30.0" y="264.2" width="1.0" height="1.5" fill="#d4d4d4"/><rect x="31.0" y="264.2" width="10.0" height="1.5" fill="#4ec9b0"/><rect x="42.0" y="264.2" width="7.0" height="1.5" fill="#9cdcfe"/><rect x="49.0" y="264.2" width="2.0" height="1.5" fill="#d4d4d4"/><rect x="51.0" y="264.2" width="7.0" height="1.5" fill="#9cdcfe"/><rect x="58.0" y="264.2" width="3.0" height="1.5" fill="#ce9178"/><rect x="61.0" y="264.2" width="10.0" height="1.5" fill="#dcdcaa"/><rect x="71.0" y="264.2" width="1.0" height="1.5" fill="#d4d4d4"/><rect x="72.0" y="264.2" width="3.0" height="1.5" fill="#9cdcfe"/><rect x="75.0" y="264.2" width="1.0" height="1.5" fill="#d4d4d4"/><rect x="76.0" y="264.2" width="4.0" height="1.5" fill="#9cdcfe"/><rect x="80.0" y="264.2" width="4.0" height="1.5" fill="#d4d4d4"/><rect x="84.0" y="264.2" width="10.0" height="1.5" fill="#4ec9b0"/><rect x="94.0" y="264.2" width="1.0" height="1.5" fill="#d4d4d4"/><rect x="30.0" y="266.2" width="1.0" height="1.5" fill="#d4d4d4"/><rect x="31.0" y="266.2" width="10.0" height="1.5" fill="#4ec9b0"/><rect x="42.0" y="266.2" width="7.0" height="1.5" fill="#9cdcfe"/><rect x="49.0" y="266.2" width="2.0" height="1.5" fill="#d4d4d4"/><rect x="51.0" y="266.2" width="7.0" height="1.5" fill="#9cdcfe"/><rect x="58.0" y="266.2" width="3.0" height="1.5" fill="#ce9178"/><rect x="61.0" y="266.2" width="3.0" height="1.5" fill="#9cdcfe"/><rect x="64.0" y="266.2" width="1.0" height="1.5" fill="#d4d4d4"/><rect x="65.0" y="266.2" width="6.0" height="1.5" fill="#9cdcfe"/><rect x="71.0" y="266.2" width="3.0" height="1.5" fill="#d4d4d4"/><rect x="74.0" y="266.2" width="10.0" height="1.5" fill="#4ec9b0"/><rect x="84.0" y="266.2" width="1.0" height="1.5" fill="#d4d4d4"/><rect x="30.0" y="268.2" width="1.0" height="1.5" fill="#d4d4d4"/><rect x="31.0" y="268.2" width="10.0" height="1.5" fill="#4ec9b0"/><rect x="42.0" y="268.2" width="7.0" height="1.5" fill="#9cdcfe"/><rect x="49.0" y="268.2" width="2.0" height="1.5" fill="#d4d4d4"/><rect x="51.0" y="268.2" width="7.0" height="1.5" fill="#9cdcfe"/><rect x="58.0" y="268.2" width="1.0" height="1.5" fill="#ce9178"/><rect x="60.0" y="268.2" width="2.0" height="1.5" fill="#9cdcfe"/><rect x="62.0" y="268.2" width="3.0" height="1.5" fill="#d4d4d4"/><rect x="66.0" y="268.2" width="5.0" height="1.5" fill="#9cdcfe"/><rect x="71.0" y="268.2" width="1.0" height="1.5" fill="#d4d4d4"/><rect x="73.0" y="268.2" width="6.0" height="1.5" fill="#ce9178"/><rect x="80.0" y="268.2" width="4.0" height="1.5" fill="#d4d4d4"/><rect x="84.0" y="268.2" width="3.0" height="1.5" fill="#9cdcfe"/><rect x="87.0" y="268.2" width="1.0" height="1.5" fill="#d4d4d4"/><rect x="88.0" y="268.2" width="5.0" height="1.5" fill="#9cdcfe"/><rect x="93.0" y="268.2" width="3.0" height="1.5" fill="#d4d4d4"/><rect x="96.0" y="268.2" width="10.0" height="1.5" fill="#4ec9b0"/><rect x="106.0" y="268.2" width="1.0" height="1.5" fill="#d4d4d4"/><rect x="28.0" y="270.2" width="2.0" height="1.5" fill="#d4d4d4"/><rect x="30.0" y="270.2" width="5.0" height="1.5" fill="#4ec9b0"/><rect x="35.0" y="270.2" width="1.0" height="1.5" fill="#d4d4d4"/><rect x="26.0" y="272.2" width="2.0" height="1.5" fill="#d4d4d4"/><rect x="28.0" y="272.2" width="5.0" height="1.5" fill="#4ec9b0"/><rect x="33.0" y="272.2" width="1.0" height="1.5" fill="#d4d4d4"/><rect x="24.0" y="274.2" width="2.0" height="1.5" fill="#d4d4d4"/><rect x="26.0" y="274.2" width="10.0" height="1.5" fill="#4ec9b0"/><rect x="36.0" y="274.2" width="1.0" height="1.5" fill="#d4d4d4"/><rect x="22.0" y="276.2" width="2.0" height="1.5" fill="#d4d4d4"/><rect x="24.0" y="276.2" width="4.0" height="1.5" fill="#4ec9b0"/><rect x="28.0" y="276.2" width="1.0" height="1.5" fill="#d4d4d4"/><rect x="20.0" y="278.2" width="2.0" height="1.5" fill="#d4d4d4"/><rect x="22.0" y="278.2" width="4.0" height="1.5" fill="#4ec9b0"/><rect x="26.0" y="278.2" width="1.0" height="1.5" fill="#d4d4d4"/><rect x="18.0" y="280.2" width="2.0" height="1.5" fill="#d4d4d4"/><rect x="20.0" y="280.2" width="15.0" height="1.5" fill="#4ec9b0"/><rect x="35.0" y="280.2" width="1.0" height="1.5" fill="#d4d4d4"/><rect x="16.0" y="282.2" width="2.0" height="1.5" fill="#d4d4d4"/><rect x="18.0" y="282.2" width="14.0" height="1.5" fill="#4ec9b0"/><rect x="32.0" y="282.2" width="1.0" height="1.5" fill="#d4d4d4"/><rect x="14.0" y="284.2" width="3.0" height="1.5" fill="#d4d4d4"/><rect x="14.0" y="286.2" width="1.0" height="1.5" fill="#d4d4d4"/><rect x="15.0" y="286.2" width="4.0" height="1.5" fill="#9cdcfe"/><rect x="19.0" y="286.2" width="1.0" height="1.5" fill="#d4d4d4"/><rect x="20.0" y="286.2" width="4.0" height="1.5" fill="#9cdcfe"/><rect x="24.0" y="286.2" width="1.0" height="1.5" fill="#d4d4d4"/><rect x="25.0" y="286.2" width="6.0" height="1.5" fill="#9cdcfe"/><rect x="32.0" y="286.2" width="3.0" height="1.5" fill="#d4d4d4"/><rect x="36.0" y="286.2" width="1.0" height="1.5" fill="#b5cea8"/><rect x="38.0" y="286.2" width="2.0" height="1.5" fill="#d4d4d4"/><rect x="41.0" y="286.2" width="1.0" height="1.5" fill="#d4d4d4"/><rect x="16.0" y="288.2" width="1.0" height="1.5" fill="#d4d4d4"/><rect x="17.0" y="288.2" width="8.0" height="1.5" fill="#4ec9b0"/><rect x="25.0" y="288.2" width="1.0" height="1.5" fill="#d4d4d4"/><rect x="18.0" y="290.2" width="1.0" height="1.5" fill="#d4d4d4"/><rect x="19.0" y="290.2" width="9.0" height="1.5" fill="#4ec9b0"/><rect x="29.0" y="290.2" width="7.0" height="1.5" fill="#9cdcfe"/><rect x="36.0" y="290.2" width="2.0" height="1.5" fill="#d4d4d4"/><rect x="38.0" y="290.2" width="9.0" height="1.5" fill="#9cdcfe"/><rect x="47.0" y="290.2" width="1.0" height="1.5" fill="#d4d4d4"/><rect x="48.0" y="290.2" width="6.0" height="1.5" fill="#9cdcfe"/><rect x="54.0" y="290.2" width="1.0" height="1.5" fill="#d4d4d4"/><rect x="56.0" y="290.2" width="5.0" height="1.5" fill="#9cdcfe"/><rect x="61.0" y="290.2" width="2.0" height="1.5" fill="#d4d4d4"/><rect x="63.0" y="290.2" width="6.0" height="1.5" fill="#9cdcfe"/><rect x="69.0" y="290.2" width="3.0" height="1.5" fill="#ce9178"/><rect x="72.0" y="290.2" width="1.0" height="1.5" fill="#dcdcaa"/><rect x="73.0" y="290.2" width="2.0" height="1.5" fill="#d4d4d4"/><rect x="75.0" y="290.2" width="6.0" height="1.5" fill="#9cdcfe"/><rect x="81.0" y="290.2" width="5.0" height="1.5" fill="#ce9178"/><rect x="86.0" y="290.2" width="9.0" height="1.5" fill="#4ec9b0"/><rect x="95.0" y="290.2" width="1.0" height="1.5" fill="#d4d4d4"/><rect x="16.0" y="292.2" width="2.0" height="1.5" fill="#d4d4d4"/><rect x="18.0" y="292.2" width="8.0" height="1.5" fill="#4ec9b0"/><rect x="26.0" y="292.2" width="1.0" height="1.5" fill="#d4d4d4"/><rect x="14.0" y="294.2" width="2.0" height="1.5" fill="#d4d4d4"/><rect x="12.0" y="296.2" width="2.0" height="1.5" fill="#d4d4d4"/><rect x="14.0" y="296.2" width="9.0" height="1.5" fill="#4ec9b0"/><rect x="23.0" y="296.2" width="1.0" height="1.5" fill="#d4d4d4"/><rect x="10.0" y="298.2" width="2.0" height="1.5" fill="#d4d4d4"/><rect x="12.0" y="298.2" width="5.0" height="1.5" fill="#4ec9b0"/><rect x="17.0" y="298.2" width="1.0" height="1.5" fill="#d4d4d4"/><rect x="8.0" y="300.2" width="2.0" height="1.5" fill="#d4d4d4"/><rect x="10.0" y="300.2" width="14.0" height="1.5" fill="#4ec9b0"/><rect x="24.0" y="300.2" width="1.0" height="1.5" fill="#d4d4d4"/><rect x="8.0" y="302.2" width="1.0" height="1.5" fill="#d4d4d4"/><rect x="9.0" y="302.2" width="15.0" height="1.5" fill="#4ec9b0"/><rect x="10.0" y="304.2" width="18.0" height="1.5" fill="#9cdcfe"/><rect x="28.0" y="304.2" width="3.0" height="1.5" fill="#d4d4d4"/><rect x="31.0" y="304.2" width="1.0" height="1.5" fill="#b5cea8"/><rect x="32.0" y="304.2" width="1.0" height="1.5" fill="#d4d4d4"/><rect x="34.0" y="304.2" width="2.0" height="1.5" fill="#b5cea8"/><rect x="36.0" y="304.2" width="1.0" height="1.5" fill="#d4d4d4"/><rect x="38.0" y="304.2" width="2.0" height="1.5" fill="#b5cea8"/><rect x="40.0" y="304.2" width="1.0" height="1.5" fill="#d4d4d4"/><rect x="42.0" y="304.2" width="2.0" height="1.5" fill="#b5cea8"/><rect x="44.0" y="304.2" width="2.0" height="1.5" fill="#d4d4d4"/><rect x="10.0" y="306.2" width="9.0" height="1.5" fill="#9cdcfe"/><rect x="19.0" y="306.2" width="2.0" height="1.5" fill="#d4d4d4"/><rect x="21.0" y="306.2" width="3.0" height="1.5" fill="#9cdcfe"/><rect x="24.0" y="306.2" width="1.0" height="1.5" fill="#ce9178"/><rect x="10.0" y="308.2" width="5.0" height="1.5" fill="#9cdcfe"/><rect x="15.0" y="308.2" width="2.0" height="1.5" fill="#d4d4d4"/><rect x="17.0" y="308.2" width="4.0" height="1.5" fill="#9cdcfe"/><rect x="21.0" y="308.2" width="1.0" height="1.5" fill="#d4d4d4"/><rect x="22.0" y="308.2" width="5.0" height="1.5" fill="#9cdcfe"/><rect x="27.0" y="308.2" width="1.0" height="1.5" fill="#d4d4d4"/><rect x="10.0" y="310.2" width="11.0" height="1.5" fill="#9cdcfe"/><rect x="21.0" y="310.2" width="2.0" height="1.5" fill="#d4d4d4"/><rect x="23.0" y="310.2" width="16.0" height="1.5" fill="#9cdcfe"/><rect x="39.0" y="310.2" width="1.0" height="1.5" fill="#d4d4d4"/><rect x="40.0" y="310.2" width="11.0" height="1.5" fill="#9cdcfe"/><rect x="51.0" y="310.2" width="1.0" height="1.5" fill="#d4d4d4"/><rect x="10.0" y="312.2" width="4.0" height="1.5" fill="#9cdcfe"/><rect x="14.0" y="312.2" width="2.0" height="1.5" fill="#d4d4d4"/><rect x="16.0" y="312.2" width="16.0" height="1.5" fill="#9cdcfe"/><rect x="32.0" y="312.2" width="1.0" height="1.5" fill="#d4d4d4"/><rect x="33.0" y="312.2" width="4.0" height="1.5" fill="#9cdcfe"/><rect x="37.0" y="312.2" width="1.0" height="1.5" fill="#d4d4d4"/><rect x="10.0" y="314.2" width="12.0" height="1.5" fill="#9cdcfe"/><rect x="22.0" y="314.2" width="2.0" height="1.5" fill="#d4d4d4"/><rect x="24.0" y="314.2" width="16.0" height="1.5" fill="#9cdcfe"/><rect x="40.0" y="314.2" width="1.0" height="1.5" fill="#d4d4d4"/><rect x="10.0" y="316.2" width="19.0" height="1.5" fill="#9cdcfe"/><rect x="29.0" y="316.2" width="2.0" height="1.5" fill="#d4d4d4"/><rect x="31.0" y="316.2" width="23.0" height="1.5" fill="#9cdcfe"/><rect x="54.0" y="316.2" width="1.0" height="1.5" fill="#d4d4d4"/><rect x="8.0" y="318.2" width="2.0" height="1.5" fill="#d4d4d4"/><rect x="6.0" y="320.2" width="2.0" height="1.5" fill="#d4d4d4"/><rect x="8.0" y="320.2" width="5.0" height="1.5" fill="#4ec9b0"/><rect x="13.0" y="320.2" width="1.0" height="1.5" fill="#d4d4d4"/><rect x="6.0" y="322.2" width="1.0" height="1.5" fill="#d4d4d4"/><rect x="7.0" y="322.2" width="3.0" height="1.5" fill="#4ec9b0"/><rect x="11.0" y="322.2" width="2.0" height="1.5" fill="#9cdcfe"/><rect x="13.0" y="322.2" width="3.0" height="1.5" fill="#d4d4d4"/><rect x="17.0" y="322.2" width="2.0" height="1.5" fill="#9cdcfe"/><rect x="19.0" y="322.2" width="1.0" height="1.5" fill="#d4d4d4"/><rect x="21.0" y="322.2" width="1.0" height="1.5" fill="#b5cea8"/><rect x="23.0" y="322.2" width="3.0" height="1.5" fill="#d4d4d4"/><rect x="8.0" y="324.2" width="1.0" height="1.5" fill="#d4d4d4"/><rect x="9.0" y="324.2" width="10.0" height="1.5" fill="#4ec9b0"/><rect x="20.0" y="324.2" width="7.0" height="1.5" fill="#9cdcfe"/><rect x="27.0" y="324.2" width="2.0" height="1.5" fill="#d4d4d4"/><rect x="29.0" y="324.2" width="5.0" height="1.5" fill="#9cdcfe"/><rect x="34.0" y="324.2" width="2.0" height="1.5" fill="#ce9178"/><rect x="10.0" y="326.2" width="1.0" height="1.5" fill="#d4d4d4"/><rect x="11.0" y="326.2" width="1.0" height="1.5" fill="#dcdcaa"/><rect x="12.0" y="326.2" width="2.0" height="1.5" fill="#d4d4d4"/><rect x="14.0" y="326.2" width="5.0" height="1.5" fill="#9cdcfe"/><rect x="19.0" y="326.2" width="4.0" height="1.5" fill="#ce9178"/><rect x="24.0" y="326.2" width="1.0" height="1.5" fill="#d4d4d4"/><rect x="25.0" y="326.2" width="4.0" height="1.5" fill="#9cdcfe"/><rect x="29.0" y="326.2" width="1.0" height="1.5" fill="#d4d4d4"/><rect x="30.0" y="326.2" width="5.0" height="1.5" fill="#9cdcfe"/><rect x="35.0" y="326.2" width="1.0" height="1.5" fill="#d4d4d4"/><rect x="8.0" y="328.2" width="2.0" height="1.5" fill="#d4d4d4"/><rect x="10.0" y="328.2" width="10.0" height="1.5" fill="#4ec9b0"/><rect x="20.0" y="328.2" width="1.0" height="1.5" fill="#d4d4d4"/><rect x="6.0" y="330.2" width="2.0" height="1.5" fill="#d4d4d4"/><rect x="8.0" y="330.2" width="3.0" height="1.5" fill="#4ec9b0"/><rect x="11.0" y="330.2" width="1.0" height="1.5" fill="#d4d4d4"/><rect x="6.0" y="332.2" width="1.0" height="1.5" fill="#d4d4d4"/><rect x="7.0" y="332.2" width="13.0" height="1.5" fill="#4ec9b0"/><rect x="21.0" y="332.2" width="4.0" height="1.5" fill="#9cdcfe"/><rect x="25.0" y="332.2" width="2.0" height="1.5" fill="#d4d4d4"/><rect x="27.0" y="332.2" width="7.0" height="1.5" fill="#9cdcfe"/><rect x="34.0" y="332.2" width="1.0" height="1.5" fill="#d4d4d4"/><rect x="36.0" y="332.2" width="5.0" height="1.5" fill="#9cdcfe"/><rect x="41.0" y="332.2" width="2.0" height="1.5" fill="#d4d4d4"/><rect x="43.0" y="332.2" width="1.0" height="1.5" fill="#dcdcaa"/><rect x="44.0" y="332.2" width="2.0" height="1.5" fill="#d4d4d4"/><rect x="46.0" y="332.2" width="7.0" height="1.5" fill="#9cdcfe"/><rect x="53.0" y="332.2" width="3.0" height="1.5" fill="#ce9178"/><rect x="57.0" y="332.2" width="7.0" height="1.5" fill="#9cdcfe"/><rect x="64.0" y="332.2" width="4.0" height="1.5" fill="#d4d4d4"/><rect x="69.0" y="332.2" width="2.0" height="1.5" fill="#d4d4d4"/><rect x="72.0" y="332.2" width="10.0" height="1.5" fill="#dcdcaa"/><rect x="82.0" y="332.2" width="1.0" height="1.5" fill="#d4d4d4"/><rect x="83.0" y="332.2" width="5.0" height="1.5" fill="#569cd6"/><rect x="88.0" y="332.2" width="2.0" height="1.5" fill="#d4d4d4"/><rect x="8.0" y="334.2" width="9.0" height="1.5" fill="#9cdcfe"/><rect x="17.0" y="334.2" width="4.0" height="1.5" fill="#d4d4d4"/><rect x="22.0" y="334.2" width="2.0" height="1.5" fill="#d4d4d4"/><rect x="25.0" y="334.2" width="9.0" height="1.5" fill="#9cdcfe"/><rect x="34.0" y="334.2" width="1.0" height="1.5" fill="#d4d4d4"/><rect x="35.0" y="334.2" width="8.0" height="1.5" fill="#dcdcaa"/><rect x="43.0" y="334.2" width="1.0" height="1.5" fill="#d4d4d4"/><rect x="44.0" y="334.2" width="7.0" height="1.5" fill="#9cdcfe"/><rect x="51.0" y="334.2" width="2.0" height="1.5" fill="#d4d4d4"/><rect x="54.0" y="334.2" width="2.0" height="1.5" fill="#d4d4d4"/><rect x="4.0" y="336.2" width="3.0" height="1.5" fill="#d4d4d4"/><rect x="2.0" y="338.2" width="1.0" height="1.5" fill="#d4d4d4"/><rect x="0.0" y="340.2" width="1.0" height="1.5" fill="#d4d4d4"/><rect x="0.0" y="344.2" width="6.0" height="1.5" fill="#c586c0"/><rect x="7.0" y="344.2" width="7.0" height="1.5" fill="#c586c0"/><rect x="15.0" y="344.2" width="11.0" height="1.5" fill="#9cdcfe"/><rect x="26.0" y="344.2" width="1.0" height="1.5" fill="#d4d4d4"/></svg>
<div class="r" style="left:1903px;top:110.4px;width:1px;height:735.6px;background:#2c2c2c;"></div>
<div class="r" style="left:371px;top:846px;width:1534px;height:160px;background:#1e1e1e;"></div>
<div class="r" style="left:371px;top:846px;width:1534px;height:1px;background:#414141;"></div>
<div class="t" style="left:395.40px;top:862.13px;font-size:13.2px;line-height:13.2px;color:#a0a0a0;font-family:'Liberation Sans', sans-serif;font-weight:normal;transform:scaleX(0.89);transform-origin:0 0;">PROBLEMS</div>
<div class="t" style="left:488.30px;top:862.13px;font-size:13.2px;line-height:13.2px;color:#a0a0a0;font-family:'Liberation Sans', sans-serif;font-weight:normal;transform:scaleX(0.89);transform-origin:0 0;">OUTPUT</div>
<div class="t" style="left:566.00px;top:862.13px;font-size:13.2px;line-height:13.2px;color:#a0a0a0;font-family:'Liberation Sans', sans-serif;font-weight:normal;transform:scaleX(0.89);transform-origin:0 0;">DEBUG CONSOLE</div>
<div class="t" style="left:698.00px;top:862.13px;font-size:13.2px;line-height:13.2px;color:#e7e7e7;font-family:'Liberation Sans', sans-serif;font-weight:normal;transform:scaleX(0.89);transform-origin:0 0;">TERMINAL</div>
<div class="t" style="left:788.30px;top:862.13px;font-size:13.2px;line-height:13.2px;color:#a0a0a0;font-family:'Liberation Sans', sans-serif;font-weight:normal;transform:scaleX(0.89);transform-origin:0 0;">PORTS</div>
<div class="r" style="left:694.8px;top:880.5px;width:67px;height:1.3px;background:#e7e7e7;"></div>
<svg class="r" style="left:1612px;top:858px;" width="20" height="20" viewBox="0 0 20 20"><path d="M3.5 2.5 H18 L16.5 17.5 H2 Z" stroke="#cccccc" stroke-width="1.2" fill="none" stroke-linejoin="round"/><path d="M6 7 L9 9.5 L6 12 M9.5 13.5 H13" stroke="#cccccc" stroke-width="1.2" fill="none"/></svg>
<div class="t" style="left:1636.50px;top:862.13px;font-size:13.2px;line-height:13.2px;color:#cccccc;font-family:'Liberation Sans', sans-serif;font-weight:normal;">powershell</div>
<svg class="r" style="left:1711px;top:858px;" width="18" height="18" viewBox="0 0 18 18"><path d="M9 1.5 V16.5 M1.5 9 H16.5" stroke="#cccccc" stroke-width="1.3"/></svg>
<svg class="r" style="left:1734px;top:862px;" width="12" height="10" viewBox="0 0 12 10"><path d="M1.5 2.5 L6 7 L10.5 2.5" stroke="#cccccc" stroke-width="1.1" fill="none"/></svg>
<svg class="r" style="left:1759px;top:859px;" width="18" height="18" viewBox="0 0 18 18"><rect x="1.5" y="1.5" width="15" height="15" rx="2" stroke="#cccccc" stroke-width="1.3" fill="none"/><path d="M9 1.5 V16.5" stroke="#cccccc" stroke-width="1.3"/></svg>
<svg class="r" style="left:1789px;top:858px;" width="18" height="20" viewBox="0 0 18 20"><path d="M2.5 4.5 H15.5 M6.5 4.5 V2.5 H11.5 V4.5 M4 4.5 L5 17.5 H13 L14 4.5 M7.5 7 V15 M10.5 7 V15" stroke="#cccccc" stroke-width="1.2" fill="none"/></svg>
<div class="r" style="left:1822.0px;top:866.3px;width:2.6px;height:2.6px;background:#cccccc;border-radius:50%"></div>
<div class="r" style="left:1828.1px;top:866.3px;width:2.6px;height:2.6px;background:#cccccc;border-radius:50%"></div>
<div class="r" style="left:1834.2px;top:866.3px;width:2.6px;height:2.6px;background:#cccccc;border-radius:50%"></div>
<svg class="r" style="left:1853px;top:861px;" width="17" height="11" viewBox="0 0 17 11"><path d="M1.5 9 L8.5 2 L15.5 9" stroke="#cccccc" stroke-width="1.3" fill="none"/></svg>
<svg class="r" style="left:1885px;top:860px;" width="14" height="14" viewBox="0 0 14 14"><path d="M1.5 1.5 L12.5 12.5 M12.5 1.5 L1.5 12.5" stroke="#cccccc" stroke-width="1.3"/></svg>
<svg class="r" style="left:378px;top:905.5px;" width="12" height="12" viewBox="0 0 12 12"><circle cx="6" cy="6" r="4" stroke="#8a8a8a" stroke-width="1.6" fill="none"/></svg>
<div class="code" style="left:395.4px;top:903px;font-size:15px;line-height:22px;color:#cccccc;letter-spacing:0px;">PS D:\git\goingpass\tickets-ui&gt;</div>
<div class="r" style="left:1903px;top:901px;width:1.5px;height:105px;background:#3a3a3a;"></div>
<div class="r" style="left:1902.5px;top:901px;width:2.5px;height:7px;background:#6a6a6a;"></div>
<div class="r" style="left:0px;top:1006px;width:1905px;height:26.4px;background:#007acc;"></div>
<div class="r" style="left:0px;top:1006px;width:41px;height:26.4px;background:#16825d;"></div>
<svg class="r" style="left:13px;top:1011px;" width="16" height="16" viewBox="0 0 16 16"><path d="M2 9 L6.5 13.5 L2 13.5 M2 13.5 L6.5 9" stroke="none" fill="none"/><path d="M2.5 8 L7 12 L2.5 16 M13.5 1 L9 5 L13.5 9" stroke="#ffffff" stroke-width="1.3" fill="none" transform="translate(0,-1.5)"/></svg>
<svg class="r" style="left:48px;top:1009px;" width="17" height="20" viewBox="0 0 17 20"><circle cx="4.5" cy="3.5" r="2" stroke="#ffffff" stroke-width="1.2" fill="none"/><circle cx="11.5" cy="7" r="2" stroke="#ffffff" stroke-width="1.2" fill="none"/><circle cx="4.5" cy="16" r="2" stroke="#ffffff" stroke-width="1.2" fill="none"/><path d="M4.5 5.5 V14 M11.5 9 C11.5 12 8 11.5 4.5 13" stroke="#ffffff" stroke-width="1.2" fill="none"/></svg>
<div class="t" style="left:69.60px;top:1013.17px;font-size:13.5px;line-height:13.5px;color:#ffffff;font-family:'Liberation Sans', sans-serif;font-weight:normal;">dev</div>
<svg class="r" style="left:98px;top:1010px;" width="19" height="18" viewBox="0 0 19 18"><path d="M3 8 A6 6 0 0 1 14.5 6 M16 10 A6 6 0 0 1 4.5 12" stroke="#ffffff" stroke-width="1.4" fill="none"/><path d="M15.5 2.5 V6.5 H11.5 M3.5 15.5 V11.5 H7.5" stroke="#ffffff" stroke-width="1.4" fill="none"/></svg>
<svg class="r" style="left:132.5px;top:1010.5px;" width="17" height="17" viewBox="0 0 17 17"><circle cx="8.5" cy="8.5" r="6.8" stroke="#ffffff" stroke-width="1.2" fill="none"/><path d="M5.8 5.8 L11.2 11.2 M11.2 5.8 L5.8 11.2" stroke="#ffffff" stroke-width="1.2"/></svg>
<div class="t" style="left:153.30px;top:1013.17px;font-size:13.5px;line-height:13.5px;color:#ffffff;font-family:'Liberation Sans', sans-serif;font-weight:normal;">0</div>
<svg class="r" style="left:165px;top:1010px;" width="18" height="17" viewBox="0 0 18 17"><path d="M9 1.5 L16.5 15.5 H1.5 Z" stroke="#ffffff" stroke-width="1.2" fill="none" stroke-linejoin="round"/><path d="M9 6 V11 M9 12.5 V14" stroke="#ffffff" stroke-width="1.3"/></svg>
<div class="t" style="left:185.40px;top:1013.17px;font-size:13.5px;line-height:13.5px;color:#ffffff;font-family:'Liberation Sans', sans-serif;font-weight:normal;">0</div>
<svg class="r" style="left:214px;top:1009.5px;" width="17" height="18" viewBox="0 0 17 18"><path d="M5 3 A5.5 5.5 0 0 0 5 11 M12 3 A5.5 5.5 0 0 1 12 11 M3 1 A8.5 8.5 0 0 0 3 13 M14 1 A8.5 8.5 0 0 1 14 13" stroke="#ffffff" stroke-width="1.1" fill="none"/><circle cx="8.5" cy="7" r="1.6" fill="#ffffff"/><path d="M8.5 8 L5 17 M8.5 8 L12 17 M6.3 13.5 H10.7" stroke="#ffffff" stroke-width="1.2"/></svg>
<div class="t" style="left:233.40px;top:1013.17px;font-size:13.5px;line-height:13.5px;color:#ffffff;font-family:'Liberation Sans', sans-serif;font-weight:normal;">0</div>
<div class="t" style="left:1383.00px;top:1013.17px;font-size:13.5px;line-height:13.5px;color:#ffffff;font-family:'Liberation Sans', sans-serif;font-weight:normal;">Ln 99, Col 69</div>
<div class="t" style="left:1483.30px;top:1013.17px;font-size:13.5px;line-height:13.5px;color:#ffffff;font-family:'Liberation Sans', sans-serif;font-weight:normal;">Spaces: 2</div>
<div class="t" style="left:1561.00px;top:1013.17px;font-size:13.5px;line-height:13.5px;color:#ffffff;font-family:'Liberation Sans', sans-serif;font-weight:normal;">UTF-8</div>
<div class="t" style="left:1617.70px;top:1013.17px;font-size:13.5px;line-height:13.5px;color:#ffffff;font-family:'Liberation Sans', sans-serif;font-weight:normal;">CRLF</div>
<div class="t" style="left:1691.40px;top:1013.17px;font-size:13.5px;line-height:13.5px;color:#ffffff;font-family:'Liberation Sans', sans-serif;font-weight:normal;">TypeScript JSX</div>
<div class="t" style="left:1819.00px;top:1013.17px;font-size:13.5px;line-height:13.5px;color:#ffffff;font-family:'Liberation Sans', sans-serif;font-weight:normal;">Go Live</div>
<svg class="r" style="left:1666px;top:1010px;" width="18" height="16" viewBox="0 0 18 16"><path d="M6 1.5 Q4.2 1.5 4.2 3.5 V6 Q4.2 7.6 2.6 7.6 Q4.2 7.6 4.2 9.2 V11.8 Q4.2 13.8 6 13.8 M12 1.5 Q13.8 1.5 13.8 3.5 V6 Q13.8 7.6 15.4 7.6 Q13.8 7.6 13.8 9.2 V11.8 Q13.8 13.8 12 13.8" stroke="#ffffff" stroke-width="1.2" fill="none"/></svg>
<svg class="r" style="left:1799px;top:1009px;" width="16" height="19" viewBox="0 0 16 19"><circle cx="8" cy="7" r="6" stroke="#ffffff" stroke-width="1.2" fill="none"/><circle cx="8" cy="7" r="3.4" stroke="#ffffff" stroke-width="1.2" fill="none"/><circle cx="8" cy="7" r="1.3" fill="#ffffff"/><path d="M8 9 V17.5" stroke="#ffffff" stroke-width="2"/></svg>
<svg class="r" style="left:1886px;top:1008px;" width="18" height="20" viewBox="0 0 18 20"><path d="M3 14.5 V8.5 A6 6 0 0 1 12 4 M3 14.5 H15 V10" stroke="#ffffff" stroke-width="1.3" fill="none"/><path d="M1.5 14.5 H16.5 M7 16.5 H11" stroke="#ffffff" stroke-width="1.3"/><circle cx="14" cy="4" r="2.8" fill="#ffffff"/></svg>
<div class="r" style="left:0;top:1032.4px;width:1905px;height:8px;background:linear-gradient(90deg,#251b30 0%,#231c2c 22%,#202125 27%,#202125 53.5%,#182548 54.5%,#172447 74.5%,#1f2228 76%,#1f2228 82%,#351c1c 88%,#381c1b 100%);"></div>
<div class="r" style="left:33px;top:1036.5px;width:10px;height:10px;border-radius:50%;background:#e48aa0;"></div>
</body></html>
